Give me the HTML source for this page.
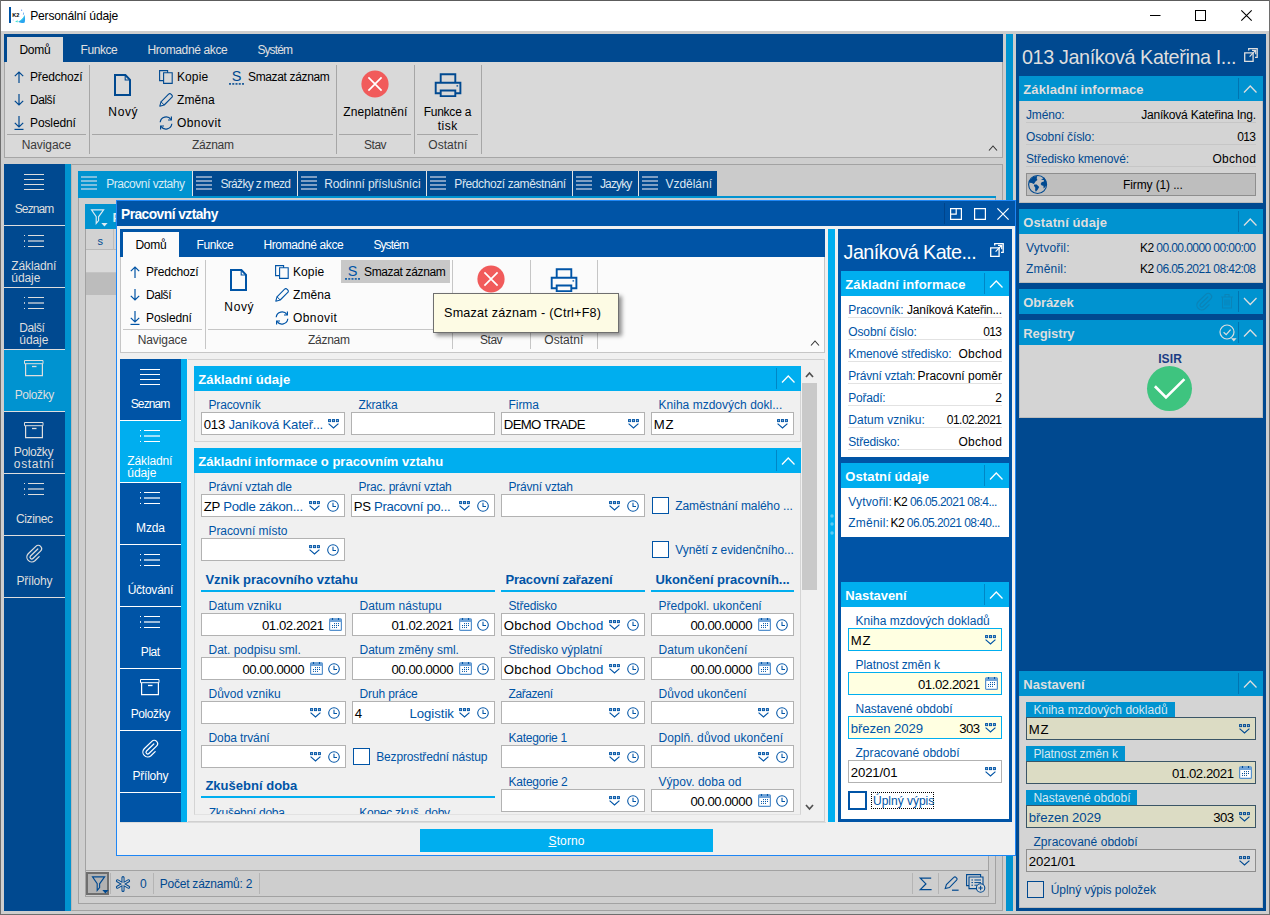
<!DOCTYPE html>
<html lang="cs"><head><meta charset="utf-8"><title>Personální údaje</title>
<style>
html,body{margin:0;padding:0;}
body{width:1270px;height:915px;overflow:hidden;position:relative;background:#C8C8C8;font-family:"Liberation Sans",sans-serif;font-size:12px;}
div,svg{position:absolute;box-sizing:border-box;}
.t{white-space:nowrap;}
svg{overflow:visible;}
</style></head><body>
<div style="left:0px;top:0px;width:1270px;height:915px;background:#CECECE;"></div>
<div style="left:1px;top:1px;width:1268px;height:30px;background:#FFFFFF;"></div>
<div style="left:0px;top:0px;width:1270px;height:1px;background:#5C5C5C;"></div>
<div style="left:0px;top:0px;width:1px;height:915px;background:#6E6E6E;"></div>
<div style="left:1269px;top:0px;width:1px;height:915px;background:#6E6E6E;"></div>
<div style="left:0px;top:914px;width:1270px;height:1px;background:#6E6E6E;"></div>
<div style="left:9px;top:7px;width:2px;height:16px;background:#0054A6;"></div>
<svg style="left:11px;top:7px;" width="16" height="17" viewBox="0 0 16 17"><path d="M13.6 8C14.2 11 14.2 14 13.7 15.4 11.5 16.4 8.6 16 7.2 14.8 10.2 13.4 12.4 11 13.6 8Z" fill="#2AA5F0"/><path d="M13.6 8C13.4 10 12.6 11.6 11 13 9.8 13.9 8.6 14.4 7.2 14.8 10.2 13.4 12.4 11 13.6 8Z" fill="#3FE0E0"/><path d="M4 14.6 6.8 13.2 6.6 15.6Z" fill="#43E3D2"/><path d="M12.4 5C12.9 6 12.9 7 12.5 7.8L11.8 7.4C12.2 6.6 12.3 5.8 12.4 5Z" fill="#2E8BF0"/><circle cx="10.6" cy="3.2" r="0.6" fill="#4F8DF5"/><circle cx="2.2" cy="13" r="0.5" fill="#9CC4F8"/></svg>
<div class="t" style="left:12.3px;top:11px;font-size:5.6px;line-height:8px;color:#000;font-weight:700;letter-spacing:-0.2px;">K2</div>
<div class="t" style="left:30.2px;top:8px;font-size:12.1px;line-height:16px;color:#000;letter-spacing:-0.182px;">Personální údaje</div>
<svg style="left:1150px;top:15px;" width="11" height="1" viewBox="0 0 11 1"><path d="M0 0.5H10.5" stroke="#000" stroke-width="1"/></svg>
<svg style="left:1195px;top:10px;" width="11" height="11" viewBox="0 0 11 11"><rect x="0.5" y="0.5" width="10" height="10" fill="none" stroke="#000" stroke-width="1"/></svg>
<svg style="left:1241px;top:10px;" width="11" height="11" viewBox="0 0 11 11"><path d="M0.3 0.3 10.7 10.7M10.7 0.3 0.3 10.7" stroke="#000" stroke-width="1.1"/></svg>
<div style="left:4px;top:34px;width:999px;height:28px;background:#004990;"></div>
<div style="left:4px;top:62px;width:999px;height:96px;background:#D9D9D9;border:1px solid #A6A6A6;border-top:none;"></div>
<div style="left:7px;top:37px;width:56px;height:25px;background:#D9D9D9;"></div>
<div class="t" style="left:19.4px;top:42px;font-size:12px;line-height:16px;color:#000;letter-spacing:-0.243px;">Domů</div>
<div class="t" style="left:80.6px;top:42px;font-size:12px;line-height:16px;color:#E0E0E0;letter-spacing:-0.454px;">Funkce</div>
<div class="t" style="left:147.4px;top:42px;font-size:12px;line-height:16px;color:#E0E0E0;letter-spacing:-0.361px;">Hromadné akce</div>
<div class="t" style="left:257.4px;top:42px;font-size:12px;line-height:16px;color:#E0E0E0;letter-spacing:-0.900px;">Systém</div>
<div style="left:89px;top:65px;width:1px;height:89px;background:#A6A6A6;"></div>
<div style="left:336px;top:65px;width:1px;height:89px;background:#A6A6A6;"></div>
<div style="left:414px;top:65px;width:1px;height:89px;background:#A6A6A6;"></div>
<div style="left:481px;top:65px;width:1px;height:89px;background:#A6A6A6;"></div>
<div style="left:7px;top:134px;width:79px;height:1px;background:#A6A6A6;"></div>
<div style="left:92px;top:134px;width:241px;height:1px;background:#A6A6A6;"></div>
<div style="left:339px;top:134px;width:72px;height:1px;background:#A6A6A6;"></div>
<div style="left:417px;top:134px;width:61px;height:1px;background:#A6A6A6;"></div>
<div class="t" style="left:-3.6000000000000014px;top:137px;font-size:12px;line-height:16px;color:#3A3A3A;width:100px;text-align:center;letter-spacing:-0.078px;margin-left:-0.039px;">Navigace</div>
<div class="t" style="left:163px;top:137px;font-size:12px;line-height:16px;color:#3A3A3A;width:100px;text-align:center;letter-spacing:-0.294px;margin-left:-0.147px;">Záznam</div>
<div class="t" style="left:325.3px;top:137px;font-size:12px;line-height:16px;color:#3A3A3A;width:100px;text-align:center;letter-spacing:-0.511px;margin-left:-0.255px;">Stav</div>
<div class="t" style="left:397.8px;top:137px;font-size:12px;line-height:16px;color:#3A3A3A;width:100px;text-align:center;letter-spacing:0.033px;margin-left:0.016px;">Ostatní</div>
<svg style="left:13.5px;top:70.5px;" width="10" height="12" viewBox="0 0 10 12"><path d="M5 12V1M0.8 5.2 5 1 9.2 5.2" stroke="#004990" stroke-width="1.2" fill="none"/></svg>
<svg style="left:13.5px;top:93.5px;" width="10" height="14" viewBox="0 0 10 14"><path d="M5 0V11M0.8 6.8 5 11 9.2 6.8" stroke="#004990" stroke-width="1.2" fill="none"/></svg>
<svg style="left:13.5px;top:116px;" width="10" height="14" viewBox="0 0 10 14"><path d="M5 0V11M0.8 6.8 5 11 9.2 6.8" stroke="#004990" stroke-width="1.2" fill="none"/><path d="M0.5 13.4H9.5" stroke="#004990" stroke-width="1.2"/></svg>
<div class="t" style="left:30px;top:69px;font-size:12px;line-height:16px;color:#000;letter-spacing:-0.169px;">Předchozí</div>
<div class="t" style="left:30px;top:92px;font-size:12px;line-height:16px;color:#000;letter-spacing:-0.465px;">Další</div>
<div class="t" style="left:30px;top:115px;font-size:12px;line-height:16px;color:#000;letter-spacing:-0.117px;">Poslední</div>
<svg style="left:114px;top:73.6px;" width="17" height="22" viewBox="0 0 17 22"><path d="M1 1H11.4L16 5.8V21H1Z" stroke="#004990" stroke-width="2" fill="#D9D9D9" stroke-linejoin="miter"/><path d="M11.2 1.5V6H15.6" stroke="#004990" stroke-width="1.1" fill="none"/></svg>
<div class="t" style="left:93px;top:104px;font-size:12px;line-height:16px;color:#000;width:60px;text-align:center;letter-spacing:0.647px;margin-left:0.323px;">Nový</div>
<svg style="left:159px;top:69.5px;" width="14" height="14" viewBox="0 0 14 14"><path d="M0.6 0.6H8.6V10.6H0.6Z" stroke="#004990" stroke-width="1.1" fill="none"/><path d="M4.6 2.8H13.2V13.4H4.6Z" stroke="#004990" stroke-width="1.1" fill="#D9D9D9"/></svg>
<svg style="left:159px;top:92.5px;" width="14" height="14" viewBox="0 0 14 14"><path d="M0.8 13.2 2 8.8 9.6 1.2a1.6 1.6 0 0 1 2.4 0l0.8 0.8a1.6 1.6 0 0 1 0 2.4L5.2 12Z" stroke="#004990" stroke-width="1.1" fill="none" stroke-linejoin="round"/><path d="M2 8.8 5.2 12" stroke="#004990" stroke-width="1" fill="none"/></svg>
<svg style="left:159px;top:115.5px;" width="14" height="14" viewBox="0 0 14 14"><path d="M1.2 6.2A5.9 5.9 0 0 1 12 3.6M12.8 7.8A5.9 5.9 0 0 1 2 10.4" stroke="#004990" stroke-width="1.2" fill="none"/><path d="M12.4 0.6V4H9M1.6 13.4V10H5" stroke="#004990" stroke-width="1.2" fill="none"/></svg>
<div class="t" style="left:177px;top:69px;font-size:12px;line-height:16px;color:#000;letter-spacing:0.097px;">Kopie</div>
<div class="t" style="left:177px;top:92px;font-size:12px;line-height:16px;color:#000;letter-spacing:0.058px;">Změna</div>
<div class="t" style="left:177px;top:115px;font-size:12px;line-height:16px;color:#000;letter-spacing:0.421px;">Obnovit</div>
<svg style="left:229px;top:69px;" width="15" height="17" viewBox="0 0 15 17"><text x="7.6" y="11.8" text-anchor="middle" font-family="Liberation Sans, sans-serif" font-size="14.5" fill="#004990">S</text><rect x="0.00" y="14" width="2" height="1.8" fill="#004990" opacity="0.85"/><rect x="3.25" y="14" width="2" height="1.8" fill="#004990" opacity="0.85"/><rect x="6.50" y="14" width="2" height="1.8" fill="#004990" opacity="0.85"/><rect x="9.75" y="14" width="2" height="1.8" fill="#004990" opacity="0.85"/><rect x="13.00" y="14" width="2" height="1.8" fill="#004990" opacity="0.85"/></svg>
<div class="t" style="left:248px;top:69px;font-size:12px;line-height:16px;color:#000;letter-spacing:-0.354px;">Smazat záznam</div>
<svg style="left:361.4px;top:70.4px;" width="28" height="28" viewBox="0 0 28 28"><circle cx="14" cy="14" r="13.6" fill="#F15B5B"/><path d="M7.4 7.4 20.6 20.6M20.6 7.4 7.4 20.6" stroke="#fff" stroke-width="1.7"/></svg>
<div class="t" style="left:335.3px;top:104px;font-size:12px;line-height:16px;color:#000;width:80px;text-align:center;letter-spacing:0.070px;margin-left:0.035px;">Zneplatnění</div>
<svg style="left:433.5px;top:72.5px;" width="28" height="25" viewBox="0 0 28 25"><path d="M6.7 9.8V1.3H21.3V9.8" stroke="#004990" stroke-width="1.9" fill="none"/><path d="M6.7 20.2H1.7V9.8H26.4V20.2H21.3" stroke="#004990" stroke-width="1.9" fill="none"/><path d="M6.7 17.5H21.3V23.1H6.7Z" stroke="#004990" stroke-width="1.9" fill="#D9D9D9"/><path d="M22.5 12.9H24.1" stroke="#004990" stroke-width="1.3"/></svg>
<div class="t" style="left:407.5px;top:104px;font-size:12px;line-height:16px;color:#000;width:80px;text-align:center;letter-spacing:-0.240px;margin-left:-0.120px;">Funkce a</div>
<div class="t" style="left:407.5px;top:118px;font-size:12px;line-height:16px;color:#000;width:80px;text-align:center;letter-spacing:0.493px;margin-left:0.247px;">tisk</div>
<svg style="left:989.0px;top:146.25px;" width="8" height="4.5" viewBox="0 0 8 4.5"><path d="M0 4.5 4.0 0 8 4.5" stroke="#333" stroke-width="1.1" fill="none"/></svg>
<div style="left:4px;top:164px;width:61px;height:747px;background:#004990;"></div>
<div style="left:65px;top:164px;width:6px;height:747px;background:#0093D0;"></div>
<div style="left:4px;top:225px;width:61px;height:1px;background:#DEDEDE;"></div>
<div style="left:24px;top:174px;width:20px;height:1px;background:#DEDEDE;"></div>
<div style="left:24px;top:179px;width:20px;height:1px;background:#DEDEDE;"></div>
<div style="left:24px;top:184px;width:20px;height:1px;background:#DEDEDE;"></div>
<div style="left:24px;top:189px;width:20px;height:1px;background:#DEDEDE;"></div>
<div class="t" style="left:4px;top:201px;font-size:12px;line-height:16px;color:#DEDEDE;width:61px;text-align:center;letter-spacing:-0.900px;margin-left:-0.450px;">Seznam</div>
<div style="left:4px;top:287px;width:61px;height:1px;background:#DEDEDE;"></div>
<div style="left:24px;top:235px;width:1px;height:1px;background:#DEDEDE;"></div>
<div style="left:28px;top:235px;width:16px;height:1px;background:#DEDEDE;"></div>
<div style="left:24px;top:240.5px;width:1px;height:1px;background:#DEDEDE;opacity:.8;height:2px;top:240px;"></div>
<svg style="left:28px;top:240px;" width="16" height="2" viewBox="0 0 16 2"><rect x="0" y="0" width="16" height="2" fill="#DEDEDE" opacity="0.62"/></svg>
<div style="left:24px;top:246px;width:1px;height:1px;background:#DEDEDE;"></div>
<div style="left:28px;top:246px;width:16px;height:1px;background:#DEDEDE;"></div>
<div class="t" style="left:11.3px;top:258px;font-size:12px;line-height:16px;color:#DEDEDE;letter-spacing:-0.135px;">Základní</div>
<div class="t" style="left:11.3px;top:270px;font-size:12px;line-height:16px;color:#DEDEDE;letter-spacing:-0.070px;">údaje</div>
<div style="left:4px;top:349px;width:61px;height:1px;background:#DEDEDE;"></div>
<div style="left:24px;top:297px;width:1px;height:1px;background:#DEDEDE;"></div>
<div style="left:28px;top:297px;width:16px;height:1px;background:#DEDEDE;"></div>
<div style="left:24px;top:302.5px;width:1px;height:1px;background:#DEDEDE;opacity:.8;height:2px;top:302px;"></div>
<svg style="left:28px;top:302px;" width="16" height="2" viewBox="0 0 16 2"><rect x="0" y="0" width="16" height="2" fill="#DEDEDE" opacity="0.62"/></svg>
<div style="left:24px;top:308px;width:1px;height:1px;background:#DEDEDE;"></div>
<div style="left:28px;top:308px;width:16px;height:1px;background:#DEDEDE;"></div>
<div class="t" style="left:19.3px;top:320px;font-size:12px;line-height:16px;color:#DEDEDE;letter-spacing:-0.465px;">Další</div>
<div class="t" style="left:19.3px;top:332px;font-size:12px;line-height:16px;color:#DEDEDE;letter-spacing:-0.070px;">údaje</div>
<div style="left:4px;top:350px;width:61px;height:61px;background:#0093D0;"></div>
<div style="left:4px;top:411px;width:61px;height:1px;background:#DEDEDE;"></div>
<svg style="left:24px;top:360px;" width="20" height="17" viewBox="0 0 20 17"><path d="M0.5 0.5H19V3.7H0.5Z" stroke="#DEDEDE" stroke-width="1" fill="none"/><path d="M1.6 4V15.6H18.4V4" stroke="#DEDEDE" stroke-width="1.2" fill="none"/><path d="M8 6.5H12.5" stroke="#DEDEDE" stroke-width="1.3"/></svg>
<div class="t" style="left:4px;top:387px;font-size:12px;line-height:16px;color:#DEDEDE;width:61px;text-align:center;letter-spacing:-0.406px;margin-left:-0.203px;">Položky</div>
<div style="left:4px;top:473px;width:61px;height:1px;background:#DEDEDE;"></div>
<svg style="left:24px;top:422px;" width="20" height="17" viewBox="0 0 20 17"><path d="M0.5 0.5H19V3.7H0.5Z" stroke="#DEDEDE" stroke-width="1" fill="none"/><path d="M1.6 4V15.6H18.4V4" stroke="#DEDEDE" stroke-width="1.2" fill="none"/><path d="M8 6.5H12.5" stroke="#DEDEDE" stroke-width="1.3"/></svg>
<div class="t" style="left:13.8px;top:444px;font-size:12px;line-height:16px;color:#DEDEDE;letter-spacing:-0.406px;">Položky</div>
<div class="t" style="left:13.8px;top:456px;font-size:12px;line-height:16px;color:#DEDEDE;letter-spacing:0.676px;">ostatní</div>
<div style="left:4px;top:535px;width:61px;height:1px;background:#DEDEDE;"></div>
<div style="left:24px;top:483px;width:1px;height:1px;background:#DEDEDE;"></div>
<div style="left:28px;top:483px;width:16px;height:1px;background:#DEDEDE;"></div>
<div style="left:24px;top:488.5px;width:1px;height:1px;background:#DEDEDE;opacity:.8;height:2px;top:488px;"></div>
<svg style="left:28px;top:488px;" width="16" height="2" viewBox="0 0 16 2"><rect x="0" y="0" width="16" height="2" fill="#DEDEDE" opacity="0.62"/></svg>
<div style="left:24px;top:494px;width:1px;height:1px;background:#DEDEDE;"></div>
<div style="left:28px;top:494px;width:16px;height:1px;background:#DEDEDE;"></div>
<div class="t" style="left:4px;top:511px;font-size:12px;line-height:16px;color:#DEDEDE;width:61px;text-align:center;letter-spacing:-0.428px;margin-left:-0.214px;">Cizinec</div>
<div style="left:4px;top:597px;width:61px;height:1px;background:#DEDEDE;"></div>
<svg style="left:14px;top:538px;" width="40" height="30" viewBox="0 0 40 30"><path d="M25.17 18.66L20.94 22.73A4.87 4.87 0 0 1 14.19 15.73L21.86 8.33A3.34 3.34 0 0 1 26.50 13.14L18.90 20.47A1.7 1.7 0 0 1 16.54 18.02L23.81 11.01" stroke="#DEDEDE" stroke-width="1.25" fill="none" stroke-linecap="round"/></svg>
<div class="t" style="left:4px;top:573px;font-size:12px;line-height:16px;color:#DEDEDE;width:61px;text-align:center;letter-spacing:-0.211px;margin-left:-0.106px;">Přílohy</div>
<div style="left:71px;top:164px;width:932px;height:747px;background:#CBCBCB;border:1px solid #A2A2A2;border-left:1px solid #B8B8B8;"></div>
<div style="left:78px;top:198px;width:918px;height:706px;background:#CFCFCF;border:1px solid #A2A2A2;border-top:none;"></div>
<div style="left:85px;top:204px;width:904px;height:693px;background:#D5D5D5;border:1px solid #A2A2A2;"></div>
<div style="left:78px;top:171px;width:639px;height:25px;background:#E4E4E4;"></div>
<div style="left:78px;top:171px;width:114px;height:27px;background:#0093D0;"></div>
<div style="left:81px;top:176px;width:16px;height:2px;background:#7DBFDF;"></div>
<div style="left:81px;top:180px;width:16px;height:2px;background:#7DBFDF;"></div>
<div style="left:81px;top:184px;width:16px;height:2px;background:#7DBFDF;"></div>
<div style="left:81px;top:188px;width:16px;height:2px;background:#7DBFDF;"></div>
<div class="t" style="left:106.3px;top:176px;font-size:12px;line-height:16px;color:#D8ECF6;letter-spacing:-0.478px;">Pracovní vztahy</div>
<div style="left:193px;top:171px;width:104px;height:25px;background:#004990;"></div>
<div style="left:196px;top:176px;width:16px;height:2px;background:#7F9FC4;"></div>
<div style="left:196px;top:180px;width:16px;height:2px;background:#7F9FC4;"></div>
<div style="left:196px;top:184px;width:16px;height:2px;background:#7F9FC4;"></div>
<div style="left:196px;top:188px;width:16px;height:2px;background:#7F9FC4;"></div>
<div class="t" style="left:220.5px;top:176px;font-size:12px;line-height:16px;color:#DCE6F0;letter-spacing:-0.692px;">Srážky z mezd</div>
<div style="left:298px;top:171px;width:128px;height:25px;background:#004990;"></div>
<div style="left:301px;top:176px;width:16px;height:2px;background:#7F9FC4;"></div>
<div style="left:301px;top:180px;width:16px;height:2px;background:#7F9FC4;"></div>
<div style="left:301px;top:184px;width:16px;height:2px;background:#7F9FC4;"></div>
<div style="left:301px;top:188px;width:16px;height:2px;background:#7F9FC4;"></div>
<div class="t" style="left:324.3px;top:176px;font-size:12px;line-height:16px;color:#DCE6F0;letter-spacing:-0.135px;">Rodinní příslušníci</div>
<div style="left:427px;top:171px;width:145px;height:25px;background:#004990;"></div>
<div style="left:430px;top:176px;width:16px;height:2px;background:#7F9FC4;"></div>
<div style="left:430px;top:180px;width:16px;height:2px;background:#7F9FC4;"></div>
<div style="left:430px;top:184px;width:16px;height:2px;background:#7F9FC4;"></div>
<div style="left:430px;top:188px;width:16px;height:2px;background:#7F9FC4;"></div>
<div class="t" style="left:454.3px;top:176px;font-size:12px;line-height:16px;color:#DCE6F0;letter-spacing:-0.396px;">Předchozí zaměstnání</div>
<div style="left:573px;top:171px;width:65px;height:25px;background:#004990;"></div>
<div style="left:576px;top:176px;width:16px;height:2px;background:#7F9FC4;"></div>
<div style="left:576px;top:180px;width:16px;height:2px;background:#7F9FC4;"></div>
<div style="left:576px;top:184px;width:16px;height:2px;background:#7F9FC4;"></div>
<div style="left:576px;top:188px;width:16px;height:2px;background:#7F9FC4;"></div>
<div class="t" style="left:600px;top:176px;font-size:12px;line-height:16px;color:#DCE6F0;letter-spacing:-0.879px;">Jazyky</div>
<div style="left:639px;top:171px;width:78px;height:25px;background:#004990;"></div>
<div style="left:642px;top:176px;width:16px;height:2px;background:#7F9FC4;"></div>
<div style="left:642px;top:180px;width:16px;height:2px;background:#7F9FC4;"></div>
<div style="left:642px;top:184px;width:16px;height:2px;background:#7F9FC4;"></div>
<div style="left:642px;top:188px;width:16px;height:2px;background:#7F9FC4;"></div>
<div class="t" style="left:665.5px;top:176px;font-size:12px;line-height:16px;color:#DCE6F0;letter-spacing:-0.031px;">Vzdělání</div>
<div style="left:78px;top:196px;width:918px;height:2px;background:#0093D0;"></div>
<div style="left:85px;top:204px;width:40px;height:25px;background:#0093D0;"></div>
<svg style="left:90px;top:209px;" width="18" height="18" viewBox="0 0 18 18"><path d="M1.5 0.9H13.6L8.6 7.8V11.6L6.2 14.4V7.8Z" stroke="#DDEBF3" stroke-width="1.15" fill="none" stroke-linejoin="miter"/><path d="M11.3 14.1H17.6L14.45 17.4Z" fill="#DDEBF3"/></svg>
<div class="t" style="left:112.5px;top:209px;font-size:13px;line-height:17px;color:#DDEBF3;font-weight:700;">P</div>
<div style="left:86px;top:229px;width:40px;height:21px;background:#D2D2D2;border-bottom:1px solid #B9B9B9;"></div>
<div style="left:113px;top:229px;width:1px;height:60px;background:#BDBDBD;"></div>
<div class="t" style="left:97.5px;top:234px;font-size:11px;line-height:14px;color:#004990;">s</div>
<div style="left:86px;top:250px;width:40px;height:22px;background:#DADADA;"></div>
<div style="left:86px;top:272px;width:40px;height:1px;background:#C4C4C4;"></div>
<div style="left:86px;top:273px;width:40px;height:22px;background:#BCBCBC;"></div>
<div style="left:86px;top:871px;width:902px;height:25px;background:#CECECE;"></div>
<div style="left:86px;top:870px;width:902px;height:1px;background:#A2A2A2;"></div>
<div style="left:86px;top:872px;width:23px;height:23px;background:#B2B2B2;border:2px solid #6E6E6E;"></div>
<svg style="left:91px;top:876px;" width="18" height="18" viewBox="0 0 18 18"><path d="M1.5 0.9H13.6L8.6 7.8V11.6L6.2 14.4V7.8Z" stroke="#004990" stroke-width="1.15" fill="none" stroke-linejoin="miter"/><path d="M11.3 14.1H17.6L14.45 17.4Z" fill="#004990"/></svg>
<div style="left:110px;top:873px;width:1px;height:21px;background:#B4B4B4;"></div>
<div style="left:153px;top:873px;width:1px;height:21px;background:#B4B4B4;"></div>
<div style="left:259px;top:873px;width:1px;height:21px;background:#B4B4B4;"></div>
<div style="left:912px;top:873px;width:1px;height:21px;background:#B4B4B4;"></div>
<div style="left:938px;top:873px;width:1px;height:21px;background:#B4B4B4;"></div>
<svg style="left:115.3px;top:875.5px;" width="16" height="16" viewBox="0 0 16 16"><path d="M8 8 8.00 1.60M8 8 2.46 4.80M8 8 2.46 11.20M8 8 8.00 14.40M8 8 13.54 11.20M8 8 13.54 4.80" stroke="#004990" stroke-width="3.1" stroke-linecap="round"/><path d="M8 8 8.00 1.70M8 8 2.54 4.85M8 8 2.54 11.15M8 8 8.00 14.30M8 8 13.46 11.15M8 8 13.46 4.85" stroke="#CECECE" stroke-width="1.1" stroke-linecap="round"/></svg>
<div class="t" style="left:140px;top:876px;font-size:12px;line-height:16px;color:#004990;">0</div>
<div class="t" style="left:159.7px;top:876px;font-size:12px;line-height:16px;color:#004990;letter-spacing:-0.225px;">Počet záznamů: 2</div>
<svg style="left:919px;top:877px;" width="13" height="14" viewBox="0 0 13 14"><path d="M12.2 1.1H1.3L6.9 6.9 1.3 12.6H12.6" stroke="#004990" stroke-width="1.25" fill="none"/></svg>
<svg style="left:944px;top:876px;" width="15" height="15" viewBox="0 0 15 15"><path d="M1.2 12.6 2.4 8.6 9.8 1.4a1.5 1.5 0 0 1 2.2 0l0.6 0.6a1.5 1.5 0 0 1 0 2.2L5.4 11.6Z" stroke="#004990" stroke-width="1.1" fill="none"/><path d="M8 14.2H14.6" stroke="#004990" stroke-width="1.2"/></svg>
<svg style="left:966px;top:874px;" width="20" height="19" viewBox="0 0 20 19"><path d="M0.6 0.6H14.6V11.6H0.6Z" stroke="#004990" stroke-width="1.1" fill="#D5D5D5"/><path d="M3 3H17V14.6H3Z" stroke="#004990" stroke-width="1.1" fill="#D5D5D5"/><path d="M5.4 6H7M8.4 6H15M5.4 8.6H7M8.4 8.6H15M5.4 11.2H7M8.4 11.2H11" stroke="#004990" stroke-width="1"/><circle cx="14.6" cy="14" r="4.2" fill="#D5D5D5" stroke="#004990" stroke-width="1.1"/><path d="M12.4 14H16.8M14.6 11.8V16.2" stroke="#004990" stroke-width="1.1"/></svg>
<div style="left:1006px;top:34px;width:7px;height:877px;background:#0093D0;"></div>
<div style="left:1016px;top:34px;width:250px;height:877px;background:#004990;"></div>
<div class="t" style="left:1022px;top:45px;font-size:19.8px;line-height:24px;color:#DEDEDE;letter-spacing:-0.390px;">013 Janíková Kateřina I...</div>
<svg style="left:1243.7px;top:47.7px;" width="15" height="15" viewBox="0 0 15 15"><path d="M0.7 4.9H9.1V13.3H0.7Z" stroke="#DEDEDE" stroke-width="1.3" fill="none"/><path d="M4.7 2.6V0.7H13.2V9.3H11" stroke="#DEDEDE" stroke-width="1.3" fill="none"/><path d="M5.6 8.6 11.4 2.6M8 2.4H11.7V6.2" stroke="#DEDEDE" stroke-width="1.2" fill="none"/></svg>
<div style="left:1019px;top:76px;width:244px;height:25px;background:#0093D0;"></div>
<div class="t" style="left:1023.3px;top:81px;font-size:13px;line-height:17px;color:#DEDEDE;font-weight:700;letter-spacing:0.105px;">Základní informace</div>
<div style="left:1238px;top:78px;width:1px;height:21px;background:rgba(0,60,120,0.35);"></div>
<svg style="left:1244.25px;top:85.55px;" width="12.5" height="6.5" viewBox="0 0 12.5 6.5"><path d="M0 6.5 6.25 0 12.5 6.5" stroke="#DEDEDE" stroke-width="1.3" fill="none"/></svg>
<div style="left:1019px;top:101px;width:244px;height:102px;background:#D4D4D4;border:1px solid #BDBDBD;border-top:none;"></div>
<div class="t" style="left:1026px;top:107px;font-size:12px;line-height:16px;color:#004990;letter-spacing:-0.154px;">Jméno:</div>
<div class="t" style="left:1036px;top:107px;font-size:12px;line-height:16px;color:#000;width:220px;text-align:right;letter-spacing:-0.225px;margin-left:-0.225px;">Janíková Kateřina Ing.</div>
<div style="left:1026px;top:122px;width:230px;height:1px;background:#C6C6C6;"></div>
<div class="t" style="left:1026px;top:129px;font-size:12px;line-height:16px;color:#004990;letter-spacing:-0.129px;">Osobní číslo:</div>
<div class="t" style="left:1036px;top:129px;font-size:12px;line-height:16px;color:#000;width:220px;text-align:right;letter-spacing:-0.621px;margin-left:-0.621px;">013</div>
<div style="left:1026px;top:144px;width:230px;height:1px;background:#C6C6C6;"></div>
<div class="t" style="left:1026px;top:151px;font-size:12px;line-height:16px;color:#004990;letter-spacing:-0.135px;">Středisko kmenové:</div>
<div class="t" style="left:1036px;top:151px;font-size:12px;line-height:16px;color:#000;width:220px;text-align:right;letter-spacing:0.310px;margin-left:0.310px;">Obchod</div>
<div style="left:1026px;top:166px;width:230px;height:1px;background:#C6C6C6;"></div>
<div style="left:1026px;top:173px;width:230px;height:23px;background:#BEBEBE;border:1px solid #8E8E8E;"></div>
<div class="t" style="left:1050px;top:177px;font-size:12px;line-height:16px;color:#000;width:206px;text-align:center;letter-spacing:-0.129px;margin-left:-0.064px;">Firmy (1) ...</div>
<svg style="left:1028px;top:175px;" width="19" height="19" viewBox="0 0 19 19"><circle cx="9.6" cy="9.5" r="9" fill="none" stroke="#004990" stroke-width="1.1"/><path d="M2 4.9 5.5 1.6 9.25 1 8.7 3.3 9.4 4.9 7.5 6.5 6.3 8.5 5.5 8.9 3.9 8.1 1.6 7.7 1 6.5ZM6.3 9.6 8.7 9.4 11.2 12 9.8 14.4 7.9 16.7 7.1 15.2 7.3 12.8 5.9 10.8ZM13 4.5 16.1 5.3 15.6 6.7 13.8 7.1 12.6 8.9 13.8 10.4 15.4 10.8 15.6 13.6 17.3 12 18.6 9.6 17.7 4.9 16.1 2.6 14.6 3.7Z" fill="#004990"/></svg>
<div style="left:1019px;top:209px;width:244px;height:25px;background:#0093D0;"></div>
<div class="t" style="left:1023.3px;top:214px;font-size:13px;line-height:17px;color:#DEDEDE;font-weight:700;letter-spacing:0.110px;">Ostatní údaje</div>
<div style="left:1238px;top:211px;width:1px;height:21px;background:rgba(0,60,120,0.35);"></div>
<svg style="left:1244.25px;top:218.55px;" width="12.5" height="6.5" viewBox="0 0 12.5 6.5"><path d="M0 6.5 6.25 0 12.5 6.5" stroke="#DEDEDE" stroke-width="1.3" fill="none"/></svg>
<div style="left:1019px;top:234px;width:244px;height:49px;background:#D4D4D4;border:1px solid #BDBDBD;border-top:none;"></div>
<div class="t" style="left:1026px;top:240px;font-size:12px;line-height:16px;color:#004990;letter-spacing:0.156px;">Vytvořil:</div>
<div class="t" style="left:1036px;top:240px;font-size:12px;line-height:16px;color:#000;width:220px;text-align:right;letter-spacing:-0.578px;margin-left:-0.578px;"><span style="color:#000">K2 </span><span style="color:#004990">00.00.0000 00:00:00</span></div>
<div class="t" style="left:1026px;top:261px;font-size:12px;line-height:16px;color:#004990;letter-spacing:0.207px;">Změnil:</div>
<div class="t" style="left:1036px;top:261px;font-size:12px;line-height:16px;color:#000;width:220px;text-align:right;letter-spacing:-0.578px;margin-left:-0.578px;"><span style="color:#000">K2 </span><span style="color:#004990">06.05.2021 08:42:08</span></div>
<div style="left:1019px;top:289px;width:244px;height:25px;background:#0093D0;"></div>
<div class="t" style="left:1023.3px;top:294px;font-size:13px;line-height:17px;color:#DEDEDE;font-weight:700;letter-spacing:-0.139px;">Obrázek</div>
<div style="left:1238px;top:291px;width:1px;height:21px;background:rgba(0,60,120,0.35);"></div>
<svg style="left:1244.25px;top:297.75px;" width="12.5" height="6.5" viewBox="0 0 12.5 6.5"><path d="M0 0 6.25 6.5 12.5 0" stroke="#DEDEDE" stroke-width="1.3" fill="none"/></svg>
<svg style="left:1183.5px;top:286px;" width="40" height="30" viewBox="0 0 40 30"><path d="M25.17 18.66L20.94 22.73A4.87 4.87 0 0 1 14.19 15.73L21.86 8.33A3.34 3.34 0 0 1 26.50 13.14L18.90 20.47A1.7 1.7 0 0 1 16.54 18.02L23.81 11.01" stroke="#0A84B8" stroke-width="1.25" fill="none" stroke-linecap="round"/></svg>
<svg style="left:1221px;top:293px;" width="12" height="16" viewBox="0 0 12 16"><path d="M1.5 4H10.5V15H1.5ZM0 4H12M4 4V1.5H8V4M4 6.5V12.5M6 6.5V12.5M8 6.5V12.5" stroke="#0A84B8" stroke-width="1.1" fill="none"/></svg>
<div style="left:1019px;top:320px;width:244px;height:25px;background:#0093D0;"></div>
<div class="t" style="left:1023.3px;top:325px;font-size:13px;line-height:17px;color:#DEDEDE;font-weight:700;letter-spacing:-0.107px;">Registry</div>
<div style="left:1238px;top:322px;width:1px;height:21px;background:rgba(0,60,120,0.35);"></div>
<svg style="left:1244.25px;top:329.55px;" width="12.5" height="6.5" viewBox="0 0 12.5 6.5"><path d="M0 6.5 6.25 0 12.5 6.5" stroke="#DEDEDE" stroke-width="1.3" fill="none"/></svg>
<div style="left:1019px;top:345px;width:244px;height:73px;background:#D4D4D4;border:1px solid #BDBDBD;border-top:none;"></div>
<svg style="left:1219px;top:324px;" width="18" height="18" viewBox="0 0 18 18"><circle cx="8" cy="8" r="7" stroke="#DEDEDE" stroke-width="1.2" fill="none"/><path d="M4.6 8.2 7.2 10.6 11.6 5.6" stroke="#DEDEDE" stroke-width="1.2" fill="none"/><path d="M12 14.3H17.6L14.8 17.4Z" fill="#DEDEDE"/></svg>
<div class="t" style="left:1140px;top:351px;font-size:12px;line-height:16px;color:#1B3C84;font-weight:700;width:60px;text-align:center;letter-spacing:0.114px;margin-left:0.057px;">ISIR</div>
<svg style="left:1147px;top:366px;" width="46" height="46" viewBox="0 0 46 46"><circle cx="22.5" cy="22.6" r="22.5" fill="#3EC47F"/><path d="M7.9 20.3 19 31.4 37.4 13.1" stroke="#FFFFFF" stroke-width="2.7" fill="none"/></svg>
<div style="left:1019px;top:671px;width:244px;height:25px;background:#0093D0;"></div>
<div class="t" style="left:1023.3px;top:676px;font-size:13px;line-height:17px;color:#DEDEDE;font-weight:700;letter-spacing:-0.006px;">Nastavení</div>
<div style="left:1238px;top:673px;width:1px;height:21px;background:rgba(0,60,120,0.35);"></div>
<svg style="left:1244.25px;top:680.55px;" width="12.5" height="6.5" viewBox="0 0 12.5 6.5"><path d="M0 6.5 6.25 0 12.5 6.5" stroke="#DEDEDE" stroke-width="1.3" fill="none"/></svg>
<div style="left:1019px;top:696px;width:244px;height:212px;background:#D4D4D4;border:1px solid #BDBDBD;border-top:none;"></div>
<div style="left:1026px;top:702px;width:149px;height:15px;background:#0093D0;"></div>
<div class="t" style="left:1033.4px;top:702px;font-size:12px;line-height:16px;color:#D8E8F0;letter-spacing:0.041px;">Kniha mzdových dokladů</div>
<div style="left:1026px;top:717px;width:230px;height:23px;background:#DCDCC4;border:1px solid #3A5566;"></div>
<svg style="left:1239.1px;top:724.1999999999999px;" width="11" height="10" viewBox="0 0 11 10"><rect x="0.55" y="0.55" width="2.1" height="2.1" fill="#7FA8D2" stroke="#004990" stroke-width="0.9"/><rect x="4.45" y="0.55" width="2.1" height="2.1" fill="#7FA8D2" stroke="#004990" stroke-width="0.9"/><rect x="8.35" y="0.55" width="2.1" height="2.1" fill="#7FA8D2" stroke="#004990" stroke-width="0.9"/><path d="M0.6 4.6 5.5 9 10.4 4.6" stroke="#004990" stroke-width="1.15" fill="none"/></svg>
<div class="t" style="left:1028.8px;top:721px;font-size:13.2px;line-height:17px;color:#000;letter-spacing:0.800px;"><span style="color:#000">MZ</span></div>
<div style="left:1026px;top:746px;width:99px;height:15px;background:#0093D0;"></div>
<div class="t" style="left:1033.4px;top:746px;font-size:12px;line-height:16px;color:#D8E8F0;letter-spacing:-0.057px;">Platnost změn k</div>
<div style="left:1026px;top:761px;width:230px;height:23px;background:#DCDCC4;border:1px solid #3A5566;"></div>
<svg style="left:1239px;top:766px;" width="13" height="13" viewBox="0 0 13 13"><rect x="0.6" y="0.8" width="11.8" height="11.6" rx="1" fill="#FFFFFF" stroke="#5590CC" stroke-width="1.2"/><rect x="0.6" y="0.8" width="11.8" height="3.2" fill="#6FA3D8"/><path d="M3.5 0V2M9.5 0V2" stroke="#004990" stroke-width="1.1"/><rect x="5.0" y="5.1" width="1" height="1" fill="#004990"/><rect x="7.0" y="5.1" width="1" height="1" fill="#004990"/><rect x="9.0" y="5.1" width="1" height="1" fill="#004990"/><rect x="3.0" y="7.0" width="1" height="1" fill="#004990"/><rect x="5.0" y="7.0" width="1" height="1" fill="#004990"/><rect x="7.0" y="7.0" width="1" height="1" fill="#004990"/><rect x="9.0" y="7.0" width="1" height="1" fill="#004990"/><rect x="3.0" y="8.9" width="1" height="1" fill="#004990"/><rect x="5.0" y="8.9" width="1" height="1" fill="#004990"/><rect x="7.0" y="8.9" width="1" height="1" fill="#004990"/></svg>
<div class="t" style="left:1084px;top:765px;font-size:13.2px;line-height:17px;color:#000;width:150px;text-align:right;letter-spacing:-0.431px;margin-left:-0.431px;"><span style="color:#000">01.02.2021</span></div>
<div style="left:1026px;top:790px;width:111px;height:15px;background:#0093D0;"></div>
<div class="t" style="left:1033.4px;top:790px;font-size:12px;line-height:16px;color:#D8E8F0;letter-spacing:-0.022px;">Nastavené období</div>
<div style="left:1026px;top:805px;width:230px;height:23px;background:#DCDCC4;border:1px solid #3A5566;"></div>
<svg style="left:1239.1px;top:812.1999999999999px;" width="11" height="10" viewBox="0 0 11 10"><rect x="0.55" y="0.55" width="2.1" height="2.1" fill="#7FA8D2" stroke="#004990" stroke-width="0.9"/><rect x="4.45" y="0.55" width="2.1" height="2.1" fill="#7FA8D2" stroke="#004990" stroke-width="0.9"/><rect x="8.35" y="0.55" width="2.1" height="2.1" fill="#7FA8D2" stroke="#004990" stroke-width="0.9"/><path d="M0.6 4.6 5.5 9 10.4 4.6" stroke="#004990" stroke-width="1.15" fill="none"/></svg>
<div class="t" style="left:1028.8px;top:809px;font-size:13.2px;line-height:17px;color:#000;letter-spacing:-0.101px;"><span style="color:#004990">březen 2029</span></div>
<div class="t" style="left:1084.1px;top:809px;font-size:13.2px;line-height:17px;color:#000;width:150px;text-align:right;letter-spacing:-0.568px;margin-left:-0.568px;"><span style="color:#000">303</span></div>
<div class="t" style="left:1033.5px;top:834px;font-size:12px;line-height:16px;color:#004990;letter-spacing:0.042px;">Zpracované období</div>
<div style="left:1026px;top:849px;width:230px;height:23px;background:#D9D9D9;border:1px solid #8E8E8E;"></div>
<svg style="left:1239.1px;top:856.1999999999999px;" width="11" height="10" viewBox="0 0 11 10"><rect x="0.55" y="0.55" width="2.1" height="2.1" fill="#7FA8D2" stroke="#004990" stroke-width="0.9"/><rect x="4.45" y="0.55" width="2.1" height="2.1" fill="#7FA8D2" stroke="#004990" stroke-width="0.9"/><rect x="8.35" y="0.55" width="2.1" height="2.1" fill="#7FA8D2" stroke="#004990" stroke-width="0.9"/><path d="M0.6 4.6 5.5 9 10.4 4.6" stroke="#004990" stroke-width="1.15" fill="none"/></svg>
<div class="t" style="left:1028.8px;top:853px;font-size:13.2px;line-height:17px;color:#000;letter-spacing:-0.154px;"><span style="color:#000">2021/01</span></div>
<div style="left:1027px;top:881px;width:17px;height:17px;background:#D9D9D9;border:1px solid #004990;"></div>
<div class="t" style="left:1050.7px;top:882px;font-size:12px;line-height:16px;color:#004990;letter-spacing:-0.043px;">Úplný výpis položek</div>
<div style="left:116px;top:200px;width:900px;height:656px;background:#F0F0F0;border:1px solid #1E86F5;"></div>
<div style="left:117px;top:201px;width:898px;height:25px;background:#0054A6;"></div>
<div class="t" style="left:121px;top:206px;font-size:13.8px;line-height:17px;color:#fff;font-weight:700;letter-spacing:-0.545px;">Pracovní vztahy</div>
<div style="left:944px;top:203px;width:1px;height:21px;background:rgba(0,40,90,0.35);"></div>
<svg style="left:950px;top:208px;" width="12" height="12" viewBox="0 0 12 12"><path d="M0.6 0.6H11.4V11.4H0.6Z" stroke="#fff" stroke-width="1.2" fill="none"/><path d="M0.6 6.2H6.2V0.6" stroke="#fff" stroke-width="1.2" fill="none"/></svg>
<svg style="left:974px;top:208px;" width="12" height="12" viewBox="0 0 12 12"><path d="M0.6 0.6H11.4V11.4H0.6Z" stroke="#fff" stroke-width="1.2" fill="none"/></svg>
<svg style="left:997px;top:208px;" width="12" height="12" viewBox="0 0 12 12"><path d="M0.4 0.4 11.6 11.6M11.6 0.4 0.4 11.6" stroke="#fff" stroke-width="1.2"/></svg>
<div style="left:120px;top:229px;width:705px;height:28px;background:#0054A6;"></div>
<div style="left:120px;top:257px;width:705px;height:96px;background:#FBFBFB;border:1px solid #C6C6C6;border-top:none;"></div>
<div style="left:123px;top:232px;width:56px;height:25px;background:#FBFBFB;"></div>
<div class="t" style="left:135.4px;top:237px;font-size:12px;line-height:16px;color:#000;letter-spacing:-0.243px;">Domů</div>
<div class="t" style="left:196.6px;top:237px;font-size:12px;line-height:16px;color:#FFFFFF;letter-spacing:-0.454px;">Funkce</div>
<div class="t" style="left:263.4px;top:237px;font-size:12px;line-height:16px;color:#FFFFFF;letter-spacing:-0.361px;">Hromadné akce</div>
<div class="t" style="left:373.4px;top:237px;font-size:12px;line-height:16px;color:#FFFFFF;letter-spacing:-0.900px;">Systém</div>
<div style="left:205px;top:260px;width:1px;height:89px;background:#C6C6C6;"></div>
<div style="left:452px;top:260px;width:1px;height:89px;background:#C6C6C6;"></div>
<div style="left:530px;top:260px;width:1px;height:89px;background:#C6C6C6;"></div>
<div style="left:597px;top:260px;width:1px;height:89px;background:#C6C6C6;"></div>
<div style="left:123px;top:329px;width:79px;height:1px;background:#C6C6C6;"></div>
<div style="left:208px;top:329px;width:241px;height:1px;background:#C6C6C6;"></div>
<div style="left:455px;top:329px;width:72px;height:1px;background:#C6C6C6;"></div>
<div style="left:533px;top:329px;width:61px;height:1px;background:#C6C6C6;"></div>
<div class="t" style="left:112.4px;top:332px;font-size:12px;line-height:16px;color:#3A3A3A;width:100px;text-align:center;letter-spacing:-0.078px;margin-left:-0.039px;">Navigace</div>
<div class="t" style="left:279px;top:332px;font-size:12px;line-height:16px;color:#3A3A3A;width:100px;text-align:center;letter-spacing:-0.294px;margin-left:-0.147px;">Záznam</div>
<div class="t" style="left:441.3px;top:332px;font-size:12px;line-height:16px;color:#3A3A3A;width:100px;text-align:center;letter-spacing:-0.511px;margin-left:-0.255px;">Stav</div>
<div class="t" style="left:513.8px;top:332px;font-size:12px;line-height:16px;color:#3A3A3A;width:100px;text-align:center;letter-spacing:0.033px;margin-left:0.016px;">Ostatní</div>
<svg style="left:129.5px;top:265.5px;" width="10" height="12" viewBox="0 0 10 12"><path d="M5 12V1M0.8 5.2 5 1 9.2 5.2" stroke="#0054A6" stroke-width="1.2" fill="none"/></svg>
<svg style="left:129.5px;top:288.5px;" width="10" height="14" viewBox="0 0 10 14"><path d="M5 0V11M0.8 6.8 5 11 9.2 6.8" stroke="#0054A6" stroke-width="1.2" fill="none"/></svg>
<svg style="left:129.5px;top:311px;" width="10" height="14" viewBox="0 0 10 14"><path d="M5 0V11M0.8 6.8 5 11 9.2 6.8" stroke="#0054A6" stroke-width="1.2" fill="none"/><path d="M0.5 13.4H9.5" stroke="#0054A6" stroke-width="1.2"/></svg>
<div class="t" style="left:146px;top:264px;font-size:12px;line-height:16px;color:#000;letter-spacing:-0.169px;">Předchozí</div>
<div class="t" style="left:146px;top:287px;font-size:12px;line-height:16px;color:#000;letter-spacing:-0.465px;">Další</div>
<div class="t" style="left:146px;top:310px;font-size:12px;line-height:16px;color:#000;letter-spacing:-0.117px;">Poslední</div>
<svg style="left:230px;top:268.6px;" width="17" height="22" viewBox="0 0 17 22"><path d="M1 1H11.4L16 5.8V21H1Z" stroke="#0054A6" stroke-width="2" fill="#FBFBFB" stroke-linejoin="miter"/><path d="M11.2 1.5V6H15.6" stroke="#0054A6" stroke-width="1.1" fill="none"/></svg>
<div class="t" style="left:209px;top:299px;font-size:12px;line-height:16px;color:#000;width:60px;text-align:center;letter-spacing:0.647px;margin-left:0.323px;">Nový</div>
<div style="left:341px;top:260px;width:109px;height:23px;background:#C8C8C8;"></div>
<svg style="left:275px;top:264.5px;" width="14" height="14" viewBox="0 0 14 14"><path d="M0.6 0.6H8.6V10.6H0.6Z" stroke="#0054A6" stroke-width="1.1" fill="none"/><path d="M4.6 2.8H13.2V13.4H4.6Z" stroke="#0054A6" stroke-width="1.1" fill="#FBFBFB"/></svg>
<svg style="left:275px;top:287.5px;" width="14" height="14" viewBox="0 0 14 14"><path d="M0.8 13.2 2 8.8 9.6 1.2a1.6 1.6 0 0 1 2.4 0l0.8 0.8a1.6 1.6 0 0 1 0 2.4L5.2 12Z" stroke="#0054A6" stroke-width="1.1" fill="none" stroke-linejoin="round"/><path d="M2 8.8 5.2 12" stroke="#0054A6" stroke-width="1" fill="none"/></svg>
<svg style="left:275px;top:310.5px;" width="14" height="14" viewBox="0 0 14 14"><path d="M1.2 6.2A5.9 5.9 0 0 1 12 3.6M12.8 7.8A5.9 5.9 0 0 1 2 10.4" stroke="#0054A6" stroke-width="1.2" fill="none"/><path d="M12.4 0.6V4H9M1.6 13.4V10H5" stroke="#0054A6" stroke-width="1.2" fill="none"/></svg>
<div class="t" style="left:293px;top:264px;font-size:12px;line-height:16px;color:#000;letter-spacing:0.097px;">Kopie</div>
<div class="t" style="left:293px;top:287px;font-size:12px;line-height:16px;color:#000;letter-spacing:0.058px;">Změna</div>
<div class="t" style="left:293px;top:310px;font-size:12px;line-height:16px;color:#000;letter-spacing:0.421px;">Obnovit</div>
<svg style="left:345px;top:264px;" width="15" height="17" viewBox="0 0 15 17"><text x="7.6" y="11.8" text-anchor="middle" font-family="Liberation Sans, sans-serif" font-size="14.5" fill="#0054A6">S</text><rect x="0.00" y="14" width="2" height="1.8" fill="#0054A6" opacity="0.85"/><rect x="3.25" y="14" width="2" height="1.8" fill="#0054A6" opacity="0.85"/><rect x="6.50" y="14" width="2" height="1.8" fill="#0054A6" opacity="0.85"/><rect x="9.75" y="14" width="2" height="1.8" fill="#0054A6" opacity="0.85"/><rect x="13.00" y="14" width="2" height="1.8" fill="#0054A6" opacity="0.85"/></svg>
<div class="t" style="left:364px;top:264px;font-size:12px;line-height:16px;color:#000;letter-spacing:-0.354px;">Smazat záznam</div>
<svg style="left:477.4px;top:265.4px;" width="28" height="28" viewBox="0 0 28 28"><circle cx="14" cy="14" r="13.6" fill="#F15B5B"/><path d="M7.4 7.4 20.6 20.6M20.6 7.4 7.4 20.6" stroke="#fff" stroke-width="1.7"/></svg>
<div class="t" style="left:451.3px;top:299px;font-size:12px;line-height:16px;color:#000;width:80px;text-align:center;letter-spacing:0.070px;margin-left:0.035px;">Zneplatnění</div>
<svg style="left:549.5px;top:267.5px;" width="28" height="25" viewBox="0 0 28 25"><path d="M6.7 9.8V1.3H21.3V9.8" stroke="#0054A6" stroke-width="1.9" fill="none"/><path d="M6.7 20.2H1.7V9.8H26.4V20.2H21.3" stroke="#0054A6" stroke-width="1.9" fill="none"/><path d="M6.7 17.5H21.3V23.1H6.7Z" stroke="#0054A6" stroke-width="1.9" fill="#FBFBFB"/><path d="M22.5 12.9H24.1" stroke="#0054A6" stroke-width="1.3"/></svg>
<div class="t" style="left:523.5px;top:299px;font-size:12px;line-height:16px;color:#000;width:80px;text-align:center;letter-spacing:-0.240px;margin-left:-0.120px;">Funkce a</div>
<div class="t" style="left:523.5px;top:313px;font-size:12px;line-height:16px;color:#000;width:80px;text-align:center;letter-spacing:0.493px;margin-left:0.247px;">tisk</div>
<svg style="left:811.0px;top:341.25px;" width="8" height="4.5" viewBox="0 0 8 4.5"><path d="M0 4.5 4.0 0 8 4.5" stroke="#333" stroke-width="1.1" fill="none"/></svg>
<div style="left:120px;top:359px;width:61px;height:463px;background:#0054A6;"></div>
<div style="left:181px;top:359px;width:6px;height:463px;background:#00AEEF;"></div>
<div style="left:120px;top:420px;width:61px;height:1px;background:#FFFFFF;"></div>
<div style="left:140px;top:369px;width:20px;height:1px;background:#FFFFFF;"></div>
<div style="left:140px;top:374px;width:20px;height:1px;background:#FFFFFF;"></div>
<div style="left:140px;top:379px;width:20px;height:1px;background:#FFFFFF;"></div>
<div style="left:140px;top:384px;width:20px;height:1px;background:#FFFFFF;"></div>
<div class="t" style="left:120px;top:396px;font-size:12px;line-height:16px;color:#FFFFFF;width:61px;text-align:center;letter-spacing:-0.900px;margin-left:-0.450px;">Seznam</div>
<div style="left:120px;top:421px;width:61px;height:61px;background:#00AEEF;"></div>
<div style="left:120px;top:482px;width:61px;height:1px;background:#FFFFFF;"></div>
<div style="left:140px;top:430px;width:1px;height:1px;background:#FFFFFF;"></div>
<div style="left:144px;top:430px;width:16px;height:1px;background:#FFFFFF;"></div>
<div style="left:140px;top:435.5px;width:1px;height:1px;background:#FFFFFF;opacity:.8;height:2px;top:435px;"></div>
<svg style="left:144px;top:435px;" width="16" height="2" viewBox="0 0 16 2"><rect x="0" y="0" width="16" height="2" fill="#FFFFFF" opacity="0.62"/></svg>
<div style="left:140px;top:441px;width:1px;height:1px;background:#FFFFFF;"></div>
<div style="left:144px;top:441px;width:16px;height:1px;background:#FFFFFF;"></div>
<div class="t" style="left:127.3px;top:453px;font-size:12px;line-height:16px;color:#FFFFFF;letter-spacing:-0.135px;">Základní</div>
<div class="t" style="left:127.3px;top:465px;font-size:12px;line-height:16px;color:#FFFFFF;letter-spacing:-0.070px;">údaje</div>
<div style="left:120px;top:544px;width:61px;height:1px;background:#FFFFFF;"></div>
<div style="left:140px;top:492px;width:1px;height:1px;background:#FFFFFF;"></div>
<div style="left:144px;top:492px;width:16px;height:1px;background:#FFFFFF;"></div>
<div style="left:140px;top:497.5px;width:1px;height:1px;background:#FFFFFF;opacity:.8;height:2px;top:497px;"></div>
<svg style="left:144px;top:497px;" width="16" height="2" viewBox="0 0 16 2"><rect x="0" y="0" width="16" height="2" fill="#FFFFFF" opacity="0.62"/></svg>
<div style="left:140px;top:503px;width:1px;height:1px;background:#FFFFFF;"></div>
<div style="left:144px;top:503px;width:16px;height:1px;background:#FFFFFF;"></div>
<div class="t" style="left:120px;top:520px;font-size:12px;line-height:16px;color:#FFFFFF;width:61px;text-align:center;letter-spacing:-0.155px;margin-left:-0.077px;">Mzda</div>
<div style="left:120px;top:606px;width:61px;height:1px;background:#FFFFFF;"></div>
<div style="left:140px;top:554px;width:1px;height:1px;background:#FFFFFF;"></div>
<div style="left:144px;top:554px;width:16px;height:1px;background:#FFFFFF;"></div>
<div style="left:140px;top:559.5px;width:1px;height:1px;background:#FFFFFF;opacity:.8;height:2px;top:559px;"></div>
<svg style="left:144px;top:559px;" width="16" height="2" viewBox="0 0 16 2"><rect x="0" y="0" width="16" height="2" fill="#FFFFFF" opacity="0.62"/></svg>
<div style="left:140px;top:565px;width:1px;height:1px;background:#FFFFFF;"></div>
<div style="left:144px;top:565px;width:16px;height:1px;background:#FFFFFF;"></div>
<div class="t" style="left:120px;top:582px;font-size:12px;line-height:16px;color:#FFFFFF;width:61px;text-align:center;letter-spacing:-0.239px;margin-left:-0.120px;">Účtování</div>
<div style="left:120px;top:668px;width:61px;height:1px;background:#FFFFFF;"></div>
<div style="left:140px;top:616px;width:1px;height:1px;background:#FFFFFF;"></div>
<div style="left:144px;top:616px;width:16px;height:1px;background:#FFFFFF;"></div>
<div style="left:140px;top:621.5px;width:1px;height:1px;background:#FFFFFF;opacity:.8;height:2px;top:621px;"></div>
<svg style="left:144px;top:621px;" width="16" height="2" viewBox="0 0 16 2"><rect x="0" y="0" width="16" height="2" fill="#FFFFFF" opacity="0.62"/></svg>
<div style="left:140px;top:627px;width:1px;height:1px;background:#FFFFFF;"></div>
<div style="left:144px;top:627px;width:16px;height:1px;background:#FFFFFF;"></div>
<div class="t" style="left:120px;top:644px;font-size:12px;line-height:16px;color:#FFFFFF;width:61px;text-align:center;letter-spacing:-0.466px;margin-left:-0.233px;">Plat</div>
<div style="left:120px;top:730px;width:61px;height:1px;background:#FFFFFF;"></div>
<svg style="left:140px;top:679px;" width="20" height="17" viewBox="0 0 20 17"><path d="M0.5 0.5H19V3.7H0.5Z" stroke="#FFFFFF" stroke-width="1" fill="none"/><path d="M1.6 4V15.6H18.4V4" stroke="#FFFFFF" stroke-width="1.2" fill="none"/><path d="M8 6.5H12.5" stroke="#FFFFFF" stroke-width="1.3"/></svg>
<div class="t" style="left:120px;top:706px;font-size:12px;line-height:16px;color:#FFFFFF;width:61px;text-align:center;letter-spacing:-0.406px;margin-left:-0.203px;">Položky</div>
<div style="left:120px;top:792px;width:61px;height:1px;background:#FFFFFF;"></div>
<svg style="left:130px;top:733px;" width="40" height="30" viewBox="0 0 40 30"><path d="M25.17 18.66L20.94 22.73A4.87 4.87 0 0 1 14.19 15.73L21.86 8.33A3.34 3.34 0 0 1 26.50 13.14L18.90 20.47A1.7 1.7 0 0 1 16.54 18.02L23.81 11.01" stroke="#FFFFFF" stroke-width="1.25" fill="none" stroke-linecap="round"/></svg>
<div class="t" style="left:120px;top:768px;font-size:12px;line-height:16px;color:#FFFFFF;width:61px;text-align:center;letter-spacing:-0.211px;margin-left:-0.106px;">Přílohy</div>
<div style="left:188px;top:359px;width:637px;height:463px;background:#F0F0F0;border:1px solid #D0D0D0;border-left:none;"></div>
<div style="left:194px;top:366px;width:607px;height:25px;background:#00AEEF;"></div>
<div class="t" style="left:198.3px;top:371px;font-size:13px;line-height:17px;color:#FFFFFF;font-weight:700;letter-spacing:0.121px;">Základní údaje</div>
<div style="left:776px;top:368px;width:1px;height:21px;background:rgba(0,60,120,0.35);"></div>
<svg style="left:782.25px;top:375.55px;" width="12.5" height="6.5" viewBox="0 0 12.5 6.5"><path d="M0 6.5 6.25 0 12.5 6.5" stroke="#FFFFFF" stroke-width="1.3" fill="none"/></svg>
<div style="left:194px;top:391px;width:607px;height:51px;background:#F0F0F0;border:1px solid #D4D4D4;border-top:none;"></div>
<div class="t" style="left:208.5px;top:397px;font-size:12px;line-height:16px;color:#0054A6;letter-spacing:-0.147px;">Pracovník</div>
<div style="left:201px;top:412px;width:144px;height:23px;background:#FFFFFF;border:1px solid #B2B2B2;"></div>
<svg style="left:328.1px;top:419.2px;" width="11" height="10" viewBox="0 0 11 10"><rect x="0.55" y="0.55" width="2.1" height="2.1" fill="#7FA8D2" stroke="#0054A6" stroke-width="0.9"/><rect x="4.45" y="0.55" width="2.1" height="2.1" fill="#7FA8D2" stroke="#0054A6" stroke-width="0.9"/><rect x="8.35" y="0.55" width="2.1" height="2.1" fill="#7FA8D2" stroke="#0054A6" stroke-width="0.9"/><path d="M0.6 4.6 5.5 9 10.4 4.6" stroke="#0054A6" stroke-width="1.15" fill="none"/></svg>
<div class="t" style="left:203.8px;top:416px;font-size:13.2px;line-height:17px;color:#000;letter-spacing:-0.258px;"><span style="color:#000">013 </span><span style="color:#0054A6">Janíková Kateř...</span></div>
<div class="t" style="left:358.5px;top:397px;font-size:12px;line-height:16px;color:#0054A6;letter-spacing:-0.155px;">Zkratka</div>
<div style="left:351px;top:412px;width:144px;height:23px;background:#FFFFFF;border:1px solid #B2B2B2;"></div>
<div class="t" style="left:508.5px;top:397px;font-size:12px;line-height:16px;color:#0054A6;letter-spacing:-0.046px;">Firma</div>
<div style="left:501px;top:412px;width:144px;height:23px;background:#FFFFFF;border:1px solid #B2B2B2;"></div>
<svg style="left:628.1px;top:419.2px;" width="11" height="10" viewBox="0 0 11 10"><rect x="0.55" y="0.55" width="2.1" height="2.1" fill="#7FA8D2" stroke="#0054A6" stroke-width="0.9"/><rect x="4.45" y="0.55" width="2.1" height="2.1" fill="#7FA8D2" stroke="#0054A6" stroke-width="0.9"/><rect x="8.35" y="0.55" width="2.1" height="2.1" fill="#7FA8D2" stroke="#0054A6" stroke-width="0.9"/><path d="M0.6 4.6 5.5 9 10.4 4.6" stroke="#0054A6" stroke-width="1.15" fill="none"/></svg>
<div class="t" style="left:503.8px;top:416px;font-size:13.2px;line-height:17px;color:#000;letter-spacing:-0.664px;"><span style="color:#000">DEMO TRADE</span></div>
<div class="t" style="left:658.5px;top:397px;font-size:12px;line-height:16px;color:#0054A6;letter-spacing:0.018px;">Kniha mzdových dokl...</div>
<div style="left:651px;top:412px;width:143px;height:23px;background:#FFFFFF;border:1px solid #B2B2B2;"></div>
<svg style="left:777.1px;top:419.2px;" width="11" height="10" viewBox="0 0 11 10"><rect x="0.55" y="0.55" width="2.1" height="2.1" fill="#7FA8D2" stroke="#0054A6" stroke-width="0.9"/><rect x="4.45" y="0.55" width="2.1" height="2.1" fill="#7FA8D2" stroke="#0054A6" stroke-width="0.9"/><rect x="8.35" y="0.55" width="2.1" height="2.1" fill="#7FA8D2" stroke="#0054A6" stroke-width="0.9"/><path d="M0.6 4.6 5.5 9 10.4 4.6" stroke="#0054A6" stroke-width="1.15" fill="none"/></svg>
<div class="t" style="left:653.8px;top:416px;font-size:13.2px;line-height:17px;color:#000;letter-spacing:0.800px;"><span style="color:#000">MZ</span></div>
<div style="left:194px;top:448px;width:607px;height:25px;background:#00AEEF;"></div>
<div class="t" style="left:198.3px;top:453px;font-size:13px;line-height:17px;color:#FFFFFF;font-weight:700;letter-spacing:0.022px;">Základní informace o pracovním vztahu</div>
<div style="left:776px;top:450px;width:1px;height:21px;background:rgba(0,60,120,0.35);"></div>
<svg style="left:782.25px;top:457.55px;" width="12.5" height="6.5" viewBox="0 0 12.5 6.5"><path d="M0 6.5 6.25 0 12.5 6.5" stroke="#FFFFFF" stroke-width="1.3" fill="none"/></svg>
<div style="left:194px;top:473px;width:607px;height:342px;background:#F0F0F0;border:1px solid #D4D4D4;border-top:none;border-bottom:1px solid #E2E2E2;"></div>
<div class="t" style="left:208.5px;top:479px;font-size:12px;line-height:16px;color:#0054A6;letter-spacing:-0.171px;">Právní vztah dle</div>
<div style="left:201px;top:494px;width:144px;height:23px;background:#FFFFFF;border:1px solid #B2B2B2;"></div>
<svg style="left:327px;top:499.8px;" width="12" height="12" viewBox="0 0 12 12"><circle cx="6" cy="6" r="5.3" stroke="#0054A6" stroke-width="1.05" fill="none"/><path d="M6 2.8V6.4H9" stroke="#0054A6" stroke-width="1.05" fill="none"/></svg>
<svg style="left:308.9px;top:501.2px;" width="11" height="10" viewBox="0 0 11 10"><rect x="0.55" y="0.55" width="2.1" height="2.1" fill="#7FA8D2" stroke="#0054A6" stroke-width="0.9"/><rect x="4.45" y="0.55" width="2.1" height="2.1" fill="#7FA8D2" stroke="#0054A6" stroke-width="0.9"/><rect x="8.35" y="0.55" width="2.1" height="2.1" fill="#7FA8D2" stroke="#0054A6" stroke-width="0.9"/><path d="M0.6 4.6 5.5 9 10.4 4.6" stroke="#0054A6" stroke-width="1.15" fill="none"/></svg>
<div class="t" style="left:203.8px;top:498px;font-size:13.2px;line-height:17px;color:#000;letter-spacing:-0.285px;"><span style="color:#000">ZP </span><span style="color:#0054A6">Podle zákon...</span></div>
<div class="t" style="left:358.5px;top:479px;font-size:12px;line-height:16px;color:#0054A6;letter-spacing:-0.202px;">Prac. právní vztah</div>
<div style="left:351px;top:494px;width:144px;height:23px;background:#FFFFFF;border:1px solid #B2B2B2;"></div>
<svg style="left:477px;top:499.8px;" width="12" height="12" viewBox="0 0 12 12"><circle cx="6" cy="6" r="5.3" stroke="#0054A6" stroke-width="1.05" fill="none"/><path d="M6 2.8V6.4H9" stroke="#0054A6" stroke-width="1.05" fill="none"/></svg>
<svg style="left:458.9px;top:501.2px;" width="11" height="10" viewBox="0 0 11 10"><rect x="0.55" y="0.55" width="2.1" height="2.1" fill="#7FA8D2" stroke="#0054A6" stroke-width="0.9"/><rect x="4.45" y="0.55" width="2.1" height="2.1" fill="#7FA8D2" stroke="#0054A6" stroke-width="0.9"/><rect x="8.35" y="0.55" width="2.1" height="2.1" fill="#7FA8D2" stroke="#0054A6" stroke-width="0.9"/><path d="M0.6 4.6 5.5 9 10.4 4.6" stroke="#0054A6" stroke-width="1.15" fill="none"/></svg>
<div class="t" style="left:353.8px;top:498px;font-size:13.2px;line-height:17px;color:#000;letter-spacing:-0.364px;"><span style="color:#000">PS </span><span style="color:#0054A6">Pracovní po...</span></div>
<div class="t" style="left:508.5px;top:479px;font-size:12px;line-height:16px;color:#0054A6;letter-spacing:-0.202px;">Právní vztah</div>
<div style="left:501px;top:494px;width:144px;height:23px;background:#FFFFFF;border:1px solid #B2B2B2;"></div>
<svg style="left:627px;top:499.8px;" width="12" height="12" viewBox="0 0 12 12"><circle cx="6" cy="6" r="5.3" stroke="#0054A6" stroke-width="1.05" fill="none"/><path d="M6 2.8V6.4H9" stroke="#0054A6" stroke-width="1.05" fill="none"/></svg>
<svg style="left:608.9px;top:501.2px;" width="11" height="10" viewBox="0 0 11 10"><rect x="0.55" y="0.55" width="2.1" height="2.1" fill="#7FA8D2" stroke="#0054A6" stroke-width="0.9"/><rect x="4.45" y="0.55" width="2.1" height="2.1" fill="#7FA8D2" stroke="#0054A6" stroke-width="0.9"/><rect x="8.35" y="0.55" width="2.1" height="2.1" fill="#7FA8D2" stroke="#0054A6" stroke-width="0.9"/><path d="M0.6 4.6 5.5 9 10.4 4.6" stroke="#0054A6" stroke-width="1.15" fill="none"/></svg>
<div style="left:652px;top:497px;width:17px;height:17px;background:#FFFFFF;border:1px solid #0054A6;"></div>
<div class="t" style="left:675.3px;top:498px;font-size:12px;line-height:16px;color:#0054A6;letter-spacing:-0.096px;">Zaměstnání malého ...</div>
<div class="t" style="left:208.5px;top:523px;font-size:12px;line-height:16px;color:#0054A6;letter-spacing:-0.088px;">Pracovní místo</div>
<div style="left:201px;top:538px;width:144px;height:23px;background:#FFFFFF;border:1px solid #B2B2B2;"></div>
<svg style="left:327px;top:543.8px;" width="12" height="12" viewBox="0 0 12 12"><circle cx="6" cy="6" r="5.3" stroke="#0054A6" stroke-width="1.05" fill="none"/><path d="M6 2.8V6.4H9" stroke="#0054A6" stroke-width="1.05" fill="none"/></svg>
<svg style="left:308.9px;top:545.1999999999999px;" width="11" height="10" viewBox="0 0 11 10"><rect x="0.55" y="0.55" width="2.1" height="2.1" fill="#7FA8D2" stroke="#0054A6" stroke-width="0.9"/><rect x="4.45" y="0.55" width="2.1" height="2.1" fill="#7FA8D2" stroke="#0054A6" stroke-width="0.9"/><rect x="8.35" y="0.55" width="2.1" height="2.1" fill="#7FA8D2" stroke="#0054A6" stroke-width="0.9"/><path d="M0.6 4.6 5.5 9 10.4 4.6" stroke="#0054A6" stroke-width="1.15" fill="none"/></svg>
<div style="left:652px;top:541px;width:17px;height:17px;background:#FFFFFF;border:1px solid #0054A6;"></div>
<div class="t" style="left:675.3px;top:542px;font-size:12px;line-height:16px;color:#0054A6;letter-spacing:-0.108px;">Vynětí z evidenčního...</div>
<div class="t" style="left:205.4px;top:571px;font-size:13px;line-height:17px;color:#0054A6;font-weight:700;letter-spacing:0.007px;">Vznik pracovního vztahu</div>
<div style="left:201px;top:590.0px;width:294px;height:2px;background:#00AEEF;"></div>
<div class="t" style="left:505.4px;top:571px;font-size:13px;line-height:17px;color:#0054A6;font-weight:700;letter-spacing:-0.166px;">Pracovní zařazení</div>
<div style="left:501px;top:590.0px;width:144px;height:2px;background:#00AEEF;"></div>
<div class="t" style="left:655.4px;top:571px;font-size:13px;line-height:17px;color:#0054A6;font-weight:700;letter-spacing:-0.046px;">Ukončení pracovníh...</div>
<div style="left:651px;top:590.0px;width:143px;height:2px;background:#00AEEF;"></div>
<div class="t" style="left:208.5px;top:598px;font-size:12px;line-height:16px;color:#0054A6;letter-spacing:0.017px;">Datum vzniku</div>
<div style="left:201px;top:613px;width:145px;height:23px;background:#FFFFFF;border:1px solid #B2B2B2;"></div>
<svg style="left:329px;top:618px;" width="13" height="13" viewBox="0 0 13 13"><rect x="0.6" y="0.8" width="11.8" height="11.6" rx="1" fill="#FFFFFF" stroke="#5590CC" stroke-width="1.2"/><rect x="0.6" y="0.8" width="11.8" height="3.2" fill="#6FA3D8"/><path d="M3.5 0V2M9.5 0V2" stroke="#0054A6" stroke-width="1.1"/><rect x="5.0" y="5.1" width="1" height="1" fill="#0054A6"/><rect x="7.0" y="5.1" width="1" height="1" fill="#0054A6"/><rect x="9.0" y="5.1" width="1" height="1" fill="#0054A6"/><rect x="3.0" y="7.0" width="1" height="1" fill="#0054A6"/><rect x="5.0" y="7.0" width="1" height="1" fill="#0054A6"/><rect x="7.0" y="7.0" width="1" height="1" fill="#0054A6"/><rect x="9.0" y="7.0" width="1" height="1" fill="#0054A6"/><rect x="3.0" y="8.9" width="1" height="1" fill="#0054A6"/><rect x="5.0" y="8.9" width="1" height="1" fill="#0054A6"/><rect x="7.0" y="8.9" width="1" height="1" fill="#0054A6"/></svg>
<div class="t" style="left:174px;top:617px;font-size:13.2px;line-height:17px;color:#000;width:150px;text-align:right;letter-spacing:-0.431px;margin-left:-0.431px;"><span style="color:#000">01.02.2021</span></div>
<div class="t" style="left:359.5px;top:598px;font-size:12px;line-height:16px;color:#0054A6;letter-spacing:0.067px;">Datum nástupu</div>
<div style="left:352px;top:613px;width:143px;height:23px;background:#FFFFFF;border:1px solid #B2B2B2;"></div>
<svg style="left:477px;top:618.8px;" width="12" height="12" viewBox="0 0 12 12"><circle cx="6" cy="6" r="5.3" stroke="#0054A6" stroke-width="1.05" fill="none"/><path d="M6 2.8V6.4H9" stroke="#0054A6" stroke-width="1.05" fill="none"/></svg>
<svg style="left:458.5px;top:618px;" width="13" height="13" viewBox="0 0 13 13"><rect x="0.6" y="0.8" width="11.8" height="11.6" rx="1" fill="#FFFFFF" stroke="#5590CC" stroke-width="1.2"/><rect x="0.6" y="0.8" width="11.8" height="3.2" fill="#6FA3D8"/><path d="M3.5 0V2M9.5 0V2" stroke="#0054A6" stroke-width="1.1"/><rect x="5.0" y="5.1" width="1" height="1" fill="#0054A6"/><rect x="7.0" y="5.1" width="1" height="1" fill="#0054A6"/><rect x="9.0" y="5.1" width="1" height="1" fill="#0054A6"/><rect x="3.0" y="7.0" width="1" height="1" fill="#0054A6"/><rect x="5.0" y="7.0" width="1" height="1" fill="#0054A6"/><rect x="7.0" y="7.0" width="1" height="1" fill="#0054A6"/><rect x="9.0" y="7.0" width="1" height="1" fill="#0054A6"/><rect x="3.0" y="8.9" width="1" height="1" fill="#0054A6"/><rect x="5.0" y="8.9" width="1" height="1" fill="#0054A6"/><rect x="7.0" y="8.9" width="1" height="1" fill="#0054A6"/></svg>
<div class="t" style="left:303.5px;top:617px;font-size:13.2px;line-height:17px;color:#000;width:150px;text-align:right;letter-spacing:-0.431px;margin-left:-0.431px;"><span style="color:#000">01.02.2021</span></div>
<div class="t" style="left:508.5px;top:598px;font-size:12px;line-height:16px;color:#0054A6;letter-spacing:-0.205px;">Středisko</div>
<div style="left:501px;top:613px;width:144px;height:23px;background:#FFFFFF;border:1px solid #B2B2B2;"></div>
<svg style="left:627px;top:618.8px;" width="12" height="12" viewBox="0 0 12 12"><circle cx="6" cy="6" r="5.3" stroke="#0054A6" stroke-width="1.05" fill="none"/><path d="M6 2.8V6.4H9" stroke="#0054A6" stroke-width="1.05" fill="none"/></svg>
<svg style="left:608.9px;top:620.1999999999999px;" width="11" height="10" viewBox="0 0 11 10"><rect x="0.55" y="0.55" width="2.1" height="2.1" fill="#7FA8D2" stroke="#0054A6" stroke-width="0.9"/><rect x="4.45" y="0.55" width="2.1" height="2.1" fill="#7FA8D2" stroke="#0054A6" stroke-width="0.9"/><rect x="8.35" y="0.55" width="2.1" height="2.1" fill="#7FA8D2" stroke="#0054A6" stroke-width="0.9"/><path d="M0.6 4.6 5.5 9 10.4 4.6" stroke="#0054A6" stroke-width="1.15" fill="none"/></svg>
<div class="t" style="left:503.8px;top:617px;font-size:13.2px;line-height:17px;color:#000;letter-spacing:0.231px;"><span style="color:#000">Obchod</span></div>
<div class="t" style="left:658.5px;top:598px;font-size:12px;line-height:16px;color:#0054A6;letter-spacing:0.026px;">Předpokl. ukončení</div>
<div style="left:651px;top:613px;width:143px;height:23px;background:#FFFFFF;border:1px solid #B2B2B2;"></div>
<svg style="left:776px;top:618.8px;" width="12" height="12" viewBox="0 0 12 12"><circle cx="6" cy="6" r="5.3" stroke="#0054A6" stroke-width="1.05" fill="none"/><path d="M6 2.8V6.4H9" stroke="#0054A6" stroke-width="1.05" fill="none"/></svg>
<svg style="left:757.5px;top:618px;" width="13" height="13" viewBox="0 0 13 13"><rect x="0.6" y="0.8" width="11.8" height="11.6" rx="1" fill="#FFFFFF" stroke="#5590CC" stroke-width="1.2"/><rect x="0.6" y="0.8" width="11.8" height="3.2" fill="#6FA3D8"/><path d="M3.5 0V2M9.5 0V2" stroke="#0054A6" stroke-width="1.1"/><rect x="5.0" y="5.1" width="1" height="1" fill="#0054A6"/><rect x="7.0" y="5.1" width="1" height="1" fill="#0054A6"/><rect x="9.0" y="5.1" width="1" height="1" fill="#0054A6"/><rect x="3.0" y="7.0" width="1" height="1" fill="#0054A6"/><rect x="5.0" y="7.0" width="1" height="1" fill="#0054A6"/><rect x="7.0" y="7.0" width="1" height="1" fill="#0054A6"/><rect x="9.0" y="7.0" width="1" height="1" fill="#0054A6"/><rect x="3.0" y="8.9" width="1" height="1" fill="#0054A6"/><rect x="5.0" y="8.9" width="1" height="1" fill="#0054A6"/><rect x="7.0" y="8.9" width="1" height="1" fill="#0054A6"/></svg>
<div class="t" style="left:602.5px;top:617px;font-size:13.2px;line-height:17px;color:#000;width:150px;text-align:right;letter-spacing:-0.431px;margin-left:-0.431px;"><span style="color:#000">00.00.0000</span></div>
<div class="t" style="left:208.5px;top:642px;font-size:12px;line-height:16px;color:#0054A6;letter-spacing:-0.027px;">Dat. podpisu sml.</div>
<div style="left:201px;top:657px;width:145px;height:23px;background:#FFFFFF;border:1px solid #B2B2B2;"></div>
<svg style="left:328px;top:662.8px;" width="12" height="12" viewBox="0 0 12 12"><circle cx="6" cy="6" r="5.3" stroke="#0054A6" stroke-width="1.05" fill="none"/><path d="M6 2.8V6.4H9" stroke="#0054A6" stroke-width="1.05" fill="none"/></svg>
<svg style="left:309.5px;top:662px;" width="13" height="13" viewBox="0 0 13 13"><rect x="0.6" y="0.8" width="11.8" height="11.6" rx="1" fill="#FFFFFF" stroke="#5590CC" stroke-width="1.2"/><rect x="0.6" y="0.8" width="11.8" height="3.2" fill="#6FA3D8"/><path d="M3.5 0V2M9.5 0V2" stroke="#0054A6" stroke-width="1.1"/><rect x="5.0" y="5.1" width="1" height="1" fill="#0054A6"/><rect x="7.0" y="5.1" width="1" height="1" fill="#0054A6"/><rect x="9.0" y="5.1" width="1" height="1" fill="#0054A6"/><rect x="3.0" y="7.0" width="1" height="1" fill="#0054A6"/><rect x="5.0" y="7.0" width="1" height="1" fill="#0054A6"/><rect x="7.0" y="7.0" width="1" height="1" fill="#0054A6"/><rect x="9.0" y="7.0" width="1" height="1" fill="#0054A6"/><rect x="3.0" y="8.9" width="1" height="1" fill="#0054A6"/><rect x="5.0" y="8.9" width="1" height="1" fill="#0054A6"/><rect x="7.0" y="8.9" width="1" height="1" fill="#0054A6"/></svg>
<div class="t" style="left:154.5px;top:661px;font-size:13.2px;line-height:17px;color:#000;width:150px;text-align:right;letter-spacing:-0.431px;margin-left:-0.431px;"><span style="color:#000">00.00.0000</span></div>
<div class="t" style="left:359.5px;top:642px;font-size:12px;line-height:16px;color:#0054A6;letter-spacing:0.002px;">Datum změny sml.</div>
<div style="left:352px;top:657px;width:143px;height:23px;background:#FFFFFF;border:1px solid #B2B2B2;"></div>
<svg style="left:477px;top:662.8px;" width="12" height="12" viewBox="0 0 12 12"><circle cx="6" cy="6" r="5.3" stroke="#0054A6" stroke-width="1.05" fill="none"/><path d="M6 2.8V6.4H9" stroke="#0054A6" stroke-width="1.05" fill="none"/></svg>
<svg style="left:458.5px;top:662px;" width="13" height="13" viewBox="0 0 13 13"><rect x="0.6" y="0.8" width="11.8" height="11.6" rx="1" fill="#FFFFFF" stroke="#5590CC" stroke-width="1.2"/><rect x="0.6" y="0.8" width="11.8" height="3.2" fill="#6FA3D8"/><path d="M3.5 0V2M9.5 0V2" stroke="#0054A6" stroke-width="1.1"/><rect x="5.0" y="5.1" width="1" height="1" fill="#0054A6"/><rect x="7.0" y="5.1" width="1" height="1" fill="#0054A6"/><rect x="9.0" y="5.1" width="1" height="1" fill="#0054A6"/><rect x="3.0" y="7.0" width="1" height="1" fill="#0054A6"/><rect x="5.0" y="7.0" width="1" height="1" fill="#0054A6"/><rect x="7.0" y="7.0" width="1" height="1" fill="#0054A6"/><rect x="9.0" y="7.0" width="1" height="1" fill="#0054A6"/><rect x="3.0" y="8.9" width="1" height="1" fill="#0054A6"/><rect x="5.0" y="8.9" width="1" height="1" fill="#0054A6"/><rect x="7.0" y="8.9" width="1" height="1" fill="#0054A6"/></svg>
<div class="t" style="left:303.5px;top:661px;font-size:13.2px;line-height:17px;color:#000;width:150px;text-align:right;letter-spacing:-0.431px;margin-left:-0.431px;"><span style="color:#000">00.00.0000</span></div>
<div class="t" style="left:508.5px;top:642px;font-size:12px;line-height:16px;color:#0054A6;letter-spacing:-0.049px;">Středisko výplatní</div>
<div style="left:501px;top:657px;width:144px;height:23px;background:#FFFFFF;border:1px solid #B2B2B2;"></div>
<svg style="left:627px;top:662.8px;" width="12" height="12" viewBox="0 0 12 12"><circle cx="6" cy="6" r="5.3" stroke="#0054A6" stroke-width="1.05" fill="none"/><path d="M6 2.8V6.4H9" stroke="#0054A6" stroke-width="1.05" fill="none"/></svg>
<svg style="left:608.9px;top:664.1999999999999px;" width="11" height="10" viewBox="0 0 11 10"><rect x="0.55" y="0.55" width="2.1" height="2.1" fill="#7FA8D2" stroke="#0054A6" stroke-width="0.9"/><rect x="4.45" y="0.55" width="2.1" height="2.1" fill="#7FA8D2" stroke="#0054A6" stroke-width="0.9"/><rect x="8.35" y="0.55" width="2.1" height="2.1" fill="#7FA8D2" stroke="#0054A6" stroke-width="0.9"/><path d="M0.6 4.6 5.5 9 10.4 4.6" stroke="#0054A6" stroke-width="1.15" fill="none"/></svg>
<div class="t" style="left:503.8px;top:661px;font-size:13.2px;line-height:17px;color:#000;letter-spacing:0.231px;"><span style="color:#000">Obchod</span></div>
<div class="t" style="left:556px;top:617px;font-size:13.2px;line-height:17px;color:#0054A6;letter-spacing:0.231px;">Obchod</div>
<div class="t" style="left:556px;top:661px;font-size:13.2px;line-height:17px;color:#0054A6;letter-spacing:0.231px;">Obchod</div>
<div class="t" style="left:658.5px;top:642px;font-size:12px;line-height:16px;color:#0054A6;letter-spacing:0.115px;">Datum ukončení</div>
<div style="left:651px;top:657px;width:143px;height:23px;background:#FFFFFF;border:1px solid #B2B2B2;"></div>
<svg style="left:776px;top:662.8px;" width="12" height="12" viewBox="0 0 12 12"><circle cx="6" cy="6" r="5.3" stroke="#0054A6" stroke-width="1.05" fill="none"/><path d="M6 2.8V6.4H9" stroke="#0054A6" stroke-width="1.05" fill="none"/></svg>
<svg style="left:757.5px;top:662px;" width="13" height="13" viewBox="0 0 13 13"><rect x="0.6" y="0.8" width="11.8" height="11.6" rx="1" fill="#FFFFFF" stroke="#5590CC" stroke-width="1.2"/><rect x="0.6" y="0.8" width="11.8" height="3.2" fill="#6FA3D8"/><path d="M3.5 0V2M9.5 0V2" stroke="#0054A6" stroke-width="1.1"/><rect x="5.0" y="5.1" width="1" height="1" fill="#0054A6"/><rect x="7.0" y="5.1" width="1" height="1" fill="#0054A6"/><rect x="9.0" y="5.1" width="1" height="1" fill="#0054A6"/><rect x="3.0" y="7.0" width="1" height="1" fill="#0054A6"/><rect x="5.0" y="7.0" width="1" height="1" fill="#0054A6"/><rect x="7.0" y="7.0" width="1" height="1" fill="#0054A6"/><rect x="9.0" y="7.0" width="1" height="1" fill="#0054A6"/><rect x="3.0" y="8.9" width="1" height="1" fill="#0054A6"/><rect x="5.0" y="8.9" width="1" height="1" fill="#0054A6"/><rect x="7.0" y="8.9" width="1" height="1" fill="#0054A6"/></svg>
<div class="t" style="left:602.5px;top:661px;font-size:13.2px;line-height:17px;color:#000;width:150px;text-align:right;letter-spacing:-0.431px;margin-left:-0.431px;"><span style="color:#000">00.00.0000</span></div>
<div class="t" style="left:208.5px;top:686px;font-size:12px;line-height:16px;color:#0054A6;letter-spacing:0.004px;">Důvod vzniku</div>
<div style="left:201px;top:701px;width:145px;height:23px;background:#FFFFFF;border:1px solid #B2B2B2;"></div>
<svg style="left:328px;top:706.8px;" width="12" height="12" viewBox="0 0 12 12"><circle cx="6" cy="6" r="5.3" stroke="#0054A6" stroke-width="1.05" fill="none"/><path d="M6 2.8V6.4H9" stroke="#0054A6" stroke-width="1.05" fill="none"/></svg>
<svg style="left:309.9px;top:708.1999999999999px;" width="11" height="10" viewBox="0 0 11 10"><rect x="0.55" y="0.55" width="2.1" height="2.1" fill="#7FA8D2" stroke="#0054A6" stroke-width="0.9"/><rect x="4.45" y="0.55" width="2.1" height="2.1" fill="#7FA8D2" stroke="#0054A6" stroke-width="0.9"/><rect x="8.35" y="0.55" width="2.1" height="2.1" fill="#7FA8D2" stroke="#0054A6" stroke-width="0.9"/><path d="M0.6 4.6 5.5 9 10.4 4.6" stroke="#0054A6" stroke-width="1.15" fill="none"/></svg>
<div class="t" style="left:359.5px;top:686px;font-size:12px;line-height:16px;color:#0054A6;letter-spacing:-0.120px;">Druh práce</div>
<div style="left:352px;top:701px;width:143px;height:23px;background:#FFFFFF;border:1px solid #B2B2B2;"></div>
<svg style="left:477px;top:706.8px;" width="12" height="12" viewBox="0 0 12 12"><circle cx="6" cy="6" r="5.3" stroke="#0054A6" stroke-width="1.05" fill="none"/><path d="M6 2.8V6.4H9" stroke="#0054A6" stroke-width="1.05" fill="none"/></svg>
<svg style="left:458.9px;top:708.1999999999999px;" width="11" height="10" viewBox="0 0 11 10"><rect x="0.55" y="0.55" width="2.1" height="2.1" fill="#7FA8D2" stroke="#0054A6" stroke-width="0.9"/><rect x="4.45" y="0.55" width="2.1" height="2.1" fill="#7FA8D2" stroke="#0054A6" stroke-width="0.9"/><rect x="8.35" y="0.55" width="2.1" height="2.1" fill="#7FA8D2" stroke="#0054A6" stroke-width="0.9"/><path d="M0.6 4.6 5.5 9 10.4 4.6" stroke="#0054A6" stroke-width="1.15" fill="none"/></svg>
<div class="t" style="left:354.8px;top:705px;font-size:13.2px;line-height:17px;color:#000;"><span style="color:#000">4</span></div>
<div class="t" style="left:303.9px;top:705px;font-size:13.2px;line-height:17px;color:#000;width:150px;text-align:right;letter-spacing:-0.038px;margin-left:-0.038px;"><span style="color:#0054A6">Logistik</span></div>
<div class="t" style="left:508.5px;top:686px;font-size:12px;line-height:16px;color:#0054A6;letter-spacing:-0.411px;">Zařazení</div>
<div style="left:501px;top:701px;width:144px;height:23px;background:#FFFFFF;border:1px solid #B2B2B2;"></div>
<svg style="left:627px;top:706.8px;" width="12" height="12" viewBox="0 0 12 12"><circle cx="6" cy="6" r="5.3" stroke="#0054A6" stroke-width="1.05" fill="none"/><path d="M6 2.8V6.4H9" stroke="#0054A6" stroke-width="1.05" fill="none"/></svg>
<svg style="left:608.9px;top:708.1999999999999px;" width="11" height="10" viewBox="0 0 11 10"><rect x="0.55" y="0.55" width="2.1" height="2.1" fill="#7FA8D2" stroke="#0054A6" stroke-width="0.9"/><rect x="4.45" y="0.55" width="2.1" height="2.1" fill="#7FA8D2" stroke="#0054A6" stroke-width="0.9"/><rect x="8.35" y="0.55" width="2.1" height="2.1" fill="#7FA8D2" stroke="#0054A6" stroke-width="0.9"/><path d="M0.6 4.6 5.5 9 10.4 4.6" stroke="#0054A6" stroke-width="1.15" fill="none"/></svg>
<div class="t" style="left:658.5px;top:686px;font-size:12px;line-height:16px;color:#0054A6;letter-spacing:0.104px;">Důvod ukončení</div>
<div style="left:651px;top:701px;width:143px;height:23px;background:#FFFFFF;border:1px solid #B2B2B2;"></div>
<svg style="left:776px;top:706.8px;" width="12" height="12" viewBox="0 0 12 12"><circle cx="6" cy="6" r="5.3" stroke="#0054A6" stroke-width="1.05" fill="none"/><path d="M6 2.8V6.4H9" stroke="#0054A6" stroke-width="1.05" fill="none"/></svg>
<svg style="left:757.9px;top:708.1999999999999px;" width="11" height="10" viewBox="0 0 11 10"><rect x="0.55" y="0.55" width="2.1" height="2.1" fill="#7FA8D2" stroke="#0054A6" stroke-width="0.9"/><rect x="4.45" y="0.55" width="2.1" height="2.1" fill="#7FA8D2" stroke="#0054A6" stroke-width="0.9"/><rect x="8.35" y="0.55" width="2.1" height="2.1" fill="#7FA8D2" stroke="#0054A6" stroke-width="0.9"/><path d="M0.6 4.6 5.5 9 10.4 4.6" stroke="#0054A6" stroke-width="1.15" fill="none"/></svg>
<div class="t" style="left:208.5px;top:730px;font-size:12px;line-height:16px;color:#0054A6;letter-spacing:-0.095px;">Doba trvání</div>
<div style="left:201px;top:745px;width:145px;height:23px;background:#FFFFFF;border:1px solid #B2B2B2;"></div>
<svg style="left:328px;top:750.8px;" width="12" height="12" viewBox="0 0 12 12"><circle cx="6" cy="6" r="5.3" stroke="#0054A6" stroke-width="1.05" fill="none"/><path d="M6 2.8V6.4H9" stroke="#0054A6" stroke-width="1.05" fill="none"/></svg>
<svg style="left:309.9px;top:752.1999999999999px;" width="11" height="10" viewBox="0 0 11 10"><rect x="0.55" y="0.55" width="2.1" height="2.1" fill="#7FA8D2" stroke="#0054A6" stroke-width="0.9"/><rect x="4.45" y="0.55" width="2.1" height="2.1" fill="#7FA8D2" stroke="#0054A6" stroke-width="0.9"/><rect x="8.35" y="0.55" width="2.1" height="2.1" fill="#7FA8D2" stroke="#0054A6" stroke-width="0.9"/><path d="M0.6 4.6 5.5 9 10.4 4.6" stroke="#0054A6" stroke-width="1.15" fill="none"/></svg>
<div style="left:353px;top:748px;width:17px;height:17px;background:#FFFFFF;border:1px solid #0054A6;"></div>
<div class="t" style="left:376.2px;top:749px;font-size:12px;line-height:16px;color:#0054A6;letter-spacing:-0.152px;">Bezprostřední nástup</div>
<div class="t" style="left:508.5px;top:730px;font-size:12px;line-height:16px;color:#0054A6;letter-spacing:-0.260px;">Kategorie 1</div>
<div style="left:501px;top:745px;width:144px;height:23px;background:#FFFFFF;border:1px solid #B2B2B2;"></div>
<svg style="left:627px;top:750.8px;" width="12" height="12" viewBox="0 0 12 12"><circle cx="6" cy="6" r="5.3" stroke="#0054A6" stroke-width="1.05" fill="none"/><path d="M6 2.8V6.4H9" stroke="#0054A6" stroke-width="1.05" fill="none"/></svg>
<svg style="left:608.9px;top:752.1999999999999px;" width="11" height="10" viewBox="0 0 11 10"><rect x="0.55" y="0.55" width="2.1" height="2.1" fill="#7FA8D2" stroke="#0054A6" stroke-width="0.9"/><rect x="4.45" y="0.55" width="2.1" height="2.1" fill="#7FA8D2" stroke="#0054A6" stroke-width="0.9"/><rect x="8.35" y="0.55" width="2.1" height="2.1" fill="#7FA8D2" stroke="#0054A6" stroke-width="0.9"/><path d="M0.6 4.6 5.5 9 10.4 4.6" stroke="#0054A6" stroke-width="1.15" fill="none"/></svg>
<div class="t" style="left:658.5px;top:730px;font-size:12px;line-height:16px;color:#0054A6;letter-spacing:0.086px;">Doplň. důvod ukončení</div>
<div style="left:651px;top:745px;width:143px;height:23px;background:#FFFFFF;border:1px solid #B2B2B2;"></div>
<svg style="left:776px;top:750.8px;" width="12" height="12" viewBox="0 0 12 12"><circle cx="6" cy="6" r="5.3" stroke="#0054A6" stroke-width="1.05" fill="none"/><path d="M6 2.8V6.4H9" stroke="#0054A6" stroke-width="1.05" fill="none"/></svg>
<svg style="left:757.9px;top:752.1999999999999px;" width="11" height="10" viewBox="0 0 11 10"><rect x="0.55" y="0.55" width="2.1" height="2.1" fill="#7FA8D2" stroke="#0054A6" stroke-width="0.9"/><rect x="4.45" y="0.55" width="2.1" height="2.1" fill="#7FA8D2" stroke="#0054A6" stroke-width="0.9"/><rect x="8.35" y="0.55" width="2.1" height="2.1" fill="#7FA8D2" stroke="#0054A6" stroke-width="0.9"/><path d="M0.6 4.6 5.5 9 10.4 4.6" stroke="#0054A6" stroke-width="1.15" fill="none"/></svg>
<div class="t" style="left:205.4px;top:777px;font-size:13px;line-height:17px;color:#0054A6;font-weight:700;letter-spacing:0.012px;">Zkušební doba</div>
<div style="left:201px;top:796.0px;width:294px;height:2px;background:#00AEEF;"></div>
<div class="t" style="left:508.5px;top:774px;font-size:12px;line-height:16px;color:#0054A6;letter-spacing:-0.210px;">Kategorie 2</div>
<div style="left:501px;top:789px;width:144px;height:23px;background:#FFFFFF;border:1px solid #B2B2B2;"></div>
<svg style="left:627px;top:794.8px;" width="12" height="12" viewBox="0 0 12 12"><circle cx="6" cy="6" r="5.3" stroke="#0054A6" stroke-width="1.05" fill="none"/><path d="M6 2.8V6.4H9" stroke="#0054A6" stroke-width="1.05" fill="none"/></svg>
<svg style="left:608.9px;top:796.1999999999999px;" width="11" height="10" viewBox="0 0 11 10"><rect x="0.55" y="0.55" width="2.1" height="2.1" fill="#7FA8D2" stroke="#0054A6" stroke-width="0.9"/><rect x="4.45" y="0.55" width="2.1" height="2.1" fill="#7FA8D2" stroke="#0054A6" stroke-width="0.9"/><rect x="8.35" y="0.55" width="2.1" height="2.1" fill="#7FA8D2" stroke="#0054A6" stroke-width="0.9"/><path d="M0.6 4.6 5.5 9 10.4 4.6" stroke="#0054A6" stroke-width="1.15" fill="none"/></svg>
<div class="t" style="left:658.5px;top:774px;font-size:12px;line-height:16px;color:#0054A6;letter-spacing:0.036px;">Výpov. doba od</div>
<div style="left:651px;top:789px;width:143px;height:23px;background:#FFFFFF;border:1px solid #B2B2B2;"></div>
<svg style="left:776px;top:794.8px;" width="12" height="12" viewBox="0 0 12 12"><circle cx="6" cy="6" r="5.3" stroke="#0054A6" stroke-width="1.05" fill="none"/><path d="M6 2.8V6.4H9" stroke="#0054A6" stroke-width="1.05" fill="none"/></svg>
<svg style="left:757.5px;top:794px;" width="13" height="13" viewBox="0 0 13 13"><rect x="0.6" y="0.8" width="11.8" height="11.6" rx="1" fill="#FFFFFF" stroke="#5590CC" stroke-width="1.2"/><rect x="0.6" y="0.8" width="11.8" height="3.2" fill="#6FA3D8"/><path d="M3.5 0V2M9.5 0V2" stroke="#0054A6" stroke-width="1.1"/><rect x="5.0" y="5.1" width="1" height="1" fill="#0054A6"/><rect x="7.0" y="5.1" width="1" height="1" fill="#0054A6"/><rect x="9.0" y="5.1" width="1" height="1" fill="#0054A6"/><rect x="3.0" y="7.0" width="1" height="1" fill="#0054A6"/><rect x="5.0" y="7.0" width="1" height="1" fill="#0054A6"/><rect x="7.0" y="7.0" width="1" height="1" fill="#0054A6"/><rect x="9.0" y="7.0" width="1" height="1" fill="#0054A6"/><rect x="3.0" y="8.9" width="1" height="1" fill="#0054A6"/><rect x="5.0" y="8.9" width="1" height="1" fill="#0054A6"/><rect x="7.0" y="8.9" width="1" height="1" fill="#0054A6"/></svg>
<div class="t" style="left:602.5px;top:793px;font-size:13.2px;line-height:17px;color:#000;width:150px;text-align:right;letter-spacing:-0.431px;margin-left:-0.431px;"><span style="color:#000">00.00.0000</span></div>
<div style="left:195px;top:800px;width:300px;height:14px;overflow:hidden;">
<div class="t" style="left:13.7px;top:5px;font-size:12px;line-height:16px;color:#0054A6;letter-spacing:-0.264px;">Zkušební doba</div>
<div class="t" style="left:164.3px;top:5px;font-size:12px;line-height:16px;color:#0054A6;letter-spacing:-0.264px;">Konec zkuš. doby</div>
</div>
<div style="left:802px;top:360px;width:15px;height:461px;background:#F0F0F0;"></div>
<div style="left:802px;top:383px;width:15px;height:207px;background:#C9C9C9;"></div>
<svg style="left:806.0px;top:373.0px;" width="7" height="4" viewBox="0 0 7 4"><path d="M0 4 3.5 0 7 4" stroke="#505050" stroke-width="1.7" fill="none"/></svg>
<svg style="left:806.0px;top:804.5px;" width="7" height="4" viewBox="0 0 7 4"><path d="M0 0 3.5 4 7 0" stroke="#505050" stroke-width="1.7" fill="none"/></svg>
<div style="left:828px;top:229px;width:7px;height:593px;background:#00AEEF;"></div>
<svg style="left:829.5px;top:513.7px;" width="4" height="4" viewBox="0 0 4 4"><circle cx="2" cy="2" r="1.7" fill="#5CCBF5"/></svg>
<svg style="left:829.5px;top:522.4px;" width="4" height="4" viewBox="0 0 4 4"><circle cx="2" cy="2" r="1.7" fill="#5CCBF5"/></svg>
<svg style="left:829.5px;top:531px;" width="4" height="4" viewBox="0 0 4 4"><circle cx="2" cy="2" r="1.7" fill="#5CCBF5"/></svg>
<div style="left:838px;top:229px;width:174px;height:593px;background:#0054A6;"></div>
<div class="t" style="left:843.6px;top:240px;font-size:19.8px;line-height:24px;color:#fff;letter-spacing:-0.580px;">Janíková Kate...</div>
<svg style="left:989.6px;top:242.6px;" width="15" height="15" viewBox="0 0 15 15"><path d="M0.7 4.9H9.1V13.3H0.7Z" stroke="#fff" stroke-width="1.3" fill="none"/><path d="M4.7 2.6V0.7H13.2V9.3H11" stroke="#fff" stroke-width="1.3" fill="none"/><path d="M5.6 8.6 11.4 2.6M8 2.4H11.7V6.2" stroke="#fff" stroke-width="1.2" fill="none"/></svg>
<div style="left:841px;top:271px;width:168px;height:25px;background:#00AEEF;"></div>
<div class="t" style="left:845.3px;top:276px;font-size:13px;line-height:17px;color:#FFFFFF;font-weight:700;letter-spacing:0.105px;">Základní informace</div>
<div style="left:984px;top:273px;width:1px;height:21px;background:rgba(0,60,120,0.35);"></div>
<svg style="left:990.25px;top:280.55px;" width="12.5" height="6.5" viewBox="0 0 12.5 6.5"><path d="M0 6.5 6.25 0 12.5 6.5" stroke="#FFFFFF" stroke-width="1.3" fill="none"/></svg>
<div style="left:841px;top:296px;width:168px;height:161px;background:#FFFFFF;"></div>
<div class="t" style="left:848.3px;top:302px;font-size:12px;line-height:16px;color:#0054A6;letter-spacing:-0.168px;">Pracovník:</div>
<div class="t" style="left:782px;top:302px;font-size:12px;line-height:16px;color:#000;width:220px;text-align:right;letter-spacing:-0.245px;margin-left:-0.245px;">Janíková Kateřin...</div>
<div style="left:848.3px;top:317px;width:153.70000000000005px;height:1px;background:#E2E2E2;"></div>
<div class="t" style="left:848.3px;top:324px;font-size:12px;line-height:16px;color:#0054A6;letter-spacing:-0.129px;">Osobní číslo:</div>
<div class="t" style="left:782px;top:324px;font-size:12px;line-height:16px;color:#000;width:220px;text-align:right;letter-spacing:-0.621px;margin-left:-0.621px;">013</div>
<div style="left:848.3px;top:339px;width:153.70000000000005px;height:1px;background:#E2E2E2;"></div>
<div class="t" style="left:848.3px;top:346px;font-size:12px;line-height:16px;color:#0054A6;letter-spacing:-0.124px;">Kmenové středisko:</div>
<div class="t" style="left:782px;top:346px;font-size:12px;line-height:16px;color:#000;width:220px;text-align:right;letter-spacing:0.310px;margin-left:0.310px;">Obchod</div>
<div style="left:848.3px;top:361px;width:153.70000000000005px;height:1px;background:#E2E2E2;"></div>
<div class="t" style="left:848.3px;top:368px;font-size:12px;line-height:16px;color:#0054A6;letter-spacing:-0.221px;">Právní vztah:</div>
<div class="t" style="left:782px;top:368px;font-size:12px;line-height:16px;color:#000;width:220px;text-align:right;letter-spacing:-0.010px;margin-left:-0.010px;">Pracovní poměr</div>
<div style="left:848.3px;top:383px;width:153.70000000000005px;height:1px;background:#E2E2E2;"></div>
<div class="t" style="left:848.3px;top:390px;font-size:12px;line-height:16px;color:#0054A6;letter-spacing:-0.235px;">Pořadí:</div>
<div class="t" style="left:782px;top:390px;font-size:12px;line-height:16px;color:#000;width:220px;text-align:right;">2</div>
<div style="left:848.3px;top:405px;width:153.70000000000005px;height:1px;background:#E2E2E2;"></div>
<div class="t" style="left:848.3px;top:412px;font-size:12px;line-height:16px;color:#0054A6;letter-spacing:0.038px;">Datum vzniku:</div>
<div class="t" style="left:782px;top:412px;font-size:12px;line-height:16px;color:#000;width:220px;text-align:right;letter-spacing:-0.542px;margin-left:-0.542px;">01.02.2021</div>
<div style="left:848.3px;top:427px;width:153.70000000000005px;height:1px;background:#E2E2E2;"></div>
<div class="t" style="left:848.3px;top:434px;font-size:12px;line-height:16px;color:#0054A6;letter-spacing:-0.208px;">Středisko:</div>
<div class="t" style="left:782px;top:434px;font-size:12px;line-height:16px;color:#000;width:220px;text-align:right;letter-spacing:0.310px;margin-left:0.310px;">Obchod</div>
<div style="left:848.3px;top:449px;width:153.70000000000005px;height:1px;background:#E2E2E2;"></div>
<div style="left:841px;top:463px;width:168px;height:25px;background:#00AEEF;"></div>
<div class="t" style="left:845.3px;top:468px;font-size:13px;line-height:17px;color:#FFFFFF;font-weight:700;letter-spacing:0.110px;">Ostatní údaje</div>
<div style="left:984px;top:465px;width:1px;height:21px;background:rgba(0,60,120,0.35);"></div>
<svg style="left:990.25px;top:472.55px;" width="12.5" height="6.5" viewBox="0 0 12.5 6.5"><path d="M0 6.5 6.25 0 12.5 6.5" stroke="#FFFFFF" stroke-width="1.3" fill="none"/></svg>
<div style="left:841px;top:488px;width:168px;height:49px;background:#FFFFFF;"></div>
<div class="t" style="left:848.3px;top:494px;font-size:12px;line-height:16px;color:#0054A6;letter-spacing:0.156px;">Vytvořil:</div>
<div class="t" style="left:782px;top:494px;font-size:12px;line-height:16px;color:#000;width:220px;text-align:right;"></div>
<div class="t" style="left:848.3px;top:515px;font-size:12px;line-height:16px;color:#0054A6;letter-spacing:0.207px;">Změnil:</div>
<div class="t" style="left:782px;top:515px;font-size:12px;line-height:16px;color:#000;width:220px;text-align:right;"></div>
<div class="t" style="left:893.5px;top:494px;font-size:12px;line-height:16px;color:#0054A6;letter-spacing:-0.544px;"><span style="color:#000">K2 </span>06.05.2021 08:4...</div>
<div class="t" style="left:890.5px;top:515px;font-size:12px;line-height:16px;color:#0054A6;letter-spacing:-0.555px;"><span style="color:#000">K2 </span>06.05.2021 08:40...</div>
<div style="left:841px;top:582px;width:168px;height:25px;background:#00AEEF;"></div>
<div class="t" style="left:845.3px;top:587px;font-size:13px;line-height:17px;color:#FFFFFF;font-weight:700;letter-spacing:-0.006px;">Nastavení</div>
<div style="left:984px;top:584px;width:1px;height:21px;background:rgba(0,60,120,0.35);"></div>
<svg style="left:990.25px;top:591.55px;" width="12.5" height="6.5" viewBox="0 0 12.5 6.5"><path d="M0 6.5 6.25 0 12.5 6.5" stroke="#FFFFFF" stroke-width="1.3" fill="none"/></svg>
<div style="left:841px;top:607px;width:168px;height:212px;background:#FFFFFF;"></div>
<div class="t" style="left:855.5px;top:613px;font-size:12px;line-height:16px;color:#0054A6;letter-spacing:0.041px;">Kniha mzdových dokladů</div>
<div style="left:848px;top:628px;width:154px;height:23px;background:#FFFFE1;border:1px solid #00AEEF;"></div>
<svg style="left:985.1px;top:635.1999999999999px;" width="11" height="10" viewBox="0 0 11 10"><rect x="0.55" y="0.55" width="2.1" height="2.1" fill="#7FA8D2" stroke="#0054A6" stroke-width="0.9"/><rect x="4.45" y="0.55" width="2.1" height="2.1" fill="#7FA8D2" stroke="#0054A6" stroke-width="0.9"/><rect x="8.35" y="0.55" width="2.1" height="2.1" fill="#7FA8D2" stroke="#0054A6" stroke-width="0.9"/><path d="M0.6 4.6 5.5 9 10.4 4.6" stroke="#0054A6" stroke-width="1.15" fill="none"/></svg>
<div class="t" style="left:850.8px;top:632px;font-size:13.2px;line-height:17px;color:#000;letter-spacing:0.800px;"><span style="color:#000">MZ</span></div>
<div class="t" style="left:855.5px;top:657px;font-size:12px;line-height:16px;color:#0054A6;letter-spacing:-0.057px;">Platnost změn k</div>
<div style="left:848px;top:672px;width:154px;height:23px;background:#FFFFE1;border:1px solid #00AEEF;"></div>
<svg style="left:985px;top:677px;" width="13" height="13" viewBox="0 0 13 13"><rect x="0.6" y="0.8" width="11.8" height="11.6" rx="1" fill="#FFFFFF" stroke="#5590CC" stroke-width="1.2"/><rect x="0.6" y="0.8" width="11.8" height="3.2" fill="#6FA3D8"/><path d="M3.5 0V2M9.5 0V2" stroke="#0054A6" stroke-width="1.1"/><rect x="5.0" y="5.1" width="1" height="1" fill="#0054A6"/><rect x="7.0" y="5.1" width="1" height="1" fill="#0054A6"/><rect x="9.0" y="5.1" width="1" height="1" fill="#0054A6"/><rect x="3.0" y="7.0" width="1" height="1" fill="#0054A6"/><rect x="5.0" y="7.0" width="1" height="1" fill="#0054A6"/><rect x="7.0" y="7.0" width="1" height="1" fill="#0054A6"/><rect x="9.0" y="7.0" width="1" height="1" fill="#0054A6"/><rect x="3.0" y="8.9" width="1" height="1" fill="#0054A6"/><rect x="5.0" y="8.9" width="1" height="1" fill="#0054A6"/><rect x="7.0" y="8.9" width="1" height="1" fill="#0054A6"/></svg>
<div class="t" style="left:830px;top:676px;font-size:13.2px;line-height:17px;color:#000;width:150px;text-align:right;letter-spacing:-0.431px;margin-left:-0.431px;"><span style="color:#000">01.02.2021</span></div>
<div class="t" style="left:855.5px;top:701px;font-size:12px;line-height:16px;color:#0054A6;letter-spacing:-0.022px;">Nastavené období</div>
<div style="left:848px;top:716px;width:154px;height:23px;background:#FFFFE1;border:1px solid #00AEEF;"></div>
<svg style="left:985.1px;top:723.1999999999999px;" width="11" height="10" viewBox="0 0 11 10"><rect x="0.55" y="0.55" width="2.1" height="2.1" fill="#7FA8D2" stroke="#0054A6" stroke-width="0.9"/><rect x="4.45" y="0.55" width="2.1" height="2.1" fill="#7FA8D2" stroke="#0054A6" stroke-width="0.9"/><rect x="8.35" y="0.55" width="2.1" height="2.1" fill="#7FA8D2" stroke="#0054A6" stroke-width="0.9"/><path d="M0.6 4.6 5.5 9 10.4 4.6" stroke="#0054A6" stroke-width="1.15" fill="none"/></svg>
<div class="t" style="left:850.8px;top:720px;font-size:13.2px;line-height:17px;color:#000;letter-spacing:-0.101px;"><span style="color:#0054A6">březen 2029</span></div>
<div class="t" style="left:830.1px;top:720px;font-size:13.2px;line-height:17px;color:#000;width:150px;text-align:right;letter-spacing:-0.568px;margin-left:-0.568px;"><span style="color:#000">303</span></div>
<div class="t" style="left:855.5px;top:745px;font-size:12px;line-height:16px;color:#0054A6;letter-spacing:0.042px;">Zpracované období</div>
<div style="left:848px;top:760px;width:154px;height:23px;background:#FFFFFF;border:1px solid #B2B2B2;"></div>
<svg style="left:985.1px;top:767.1999999999999px;" width="11" height="10" viewBox="0 0 11 10"><rect x="0.55" y="0.55" width="2.1" height="2.1" fill="#7FA8D2" stroke="#0054A6" stroke-width="0.9"/><rect x="4.45" y="0.55" width="2.1" height="2.1" fill="#7FA8D2" stroke="#0054A6" stroke-width="0.9"/><rect x="8.35" y="0.55" width="2.1" height="2.1" fill="#7FA8D2" stroke="#0054A6" stroke-width="0.9"/><path d="M0.6 4.6 5.5 9 10.4 4.6" stroke="#0054A6" stroke-width="1.15" fill="none"/></svg>
<div class="t" style="left:850.8px;top:764px;font-size:13.2px;line-height:17px;color:#000;letter-spacing:-0.154px;"><span style="color:#000">2021/01</span></div>
<div style="left:848px;top:791px;width:19px;height:19px;background:#FFFFFF;border:2px solid #0054A6;"></div>
<div class="t" style="left:871px;top:793px;font-size:12px;line-height:16px;color:#0054A6;"></div>
<div class="t" style="left:871px;top:792px;height:17px;width:63px;border:1px dotted #000;font-size:12px;line-height:17px;color:#0054A6;padding-left:1px;letter-spacing:-0.007px;">Úplný výpis</div>
<div style="left:120px;top:822px;width:706px;height:1px;background:#DCDCDC;"></div>
<div style="left:420px;top:829px;width:293px;height:23px;background:#00AEEF;"></div>
<div class="t" style="left:420px;top:833px;font-size:12px;line-height:16px;color:#fff;width:293px;text-align:center;letter-spacing:0.125px;margin-left:0.062px;"><span style="text-decoration:underline">S</span>torno</div>
<div style="left:433px;top:293px;width:186px;height:40px;background:#FDFBE4;border:1px solid #6F6F6F;box-shadow:3px 3px 4px rgba(0,0,0,0.42);"></div>
<div class="t" style="left:444px;top:305px;font-size:12.6px;line-height:16px;color:#000;letter-spacing:0.231px;">Smazat záznam - (Ctrl+F8)</div>
</body></html>
